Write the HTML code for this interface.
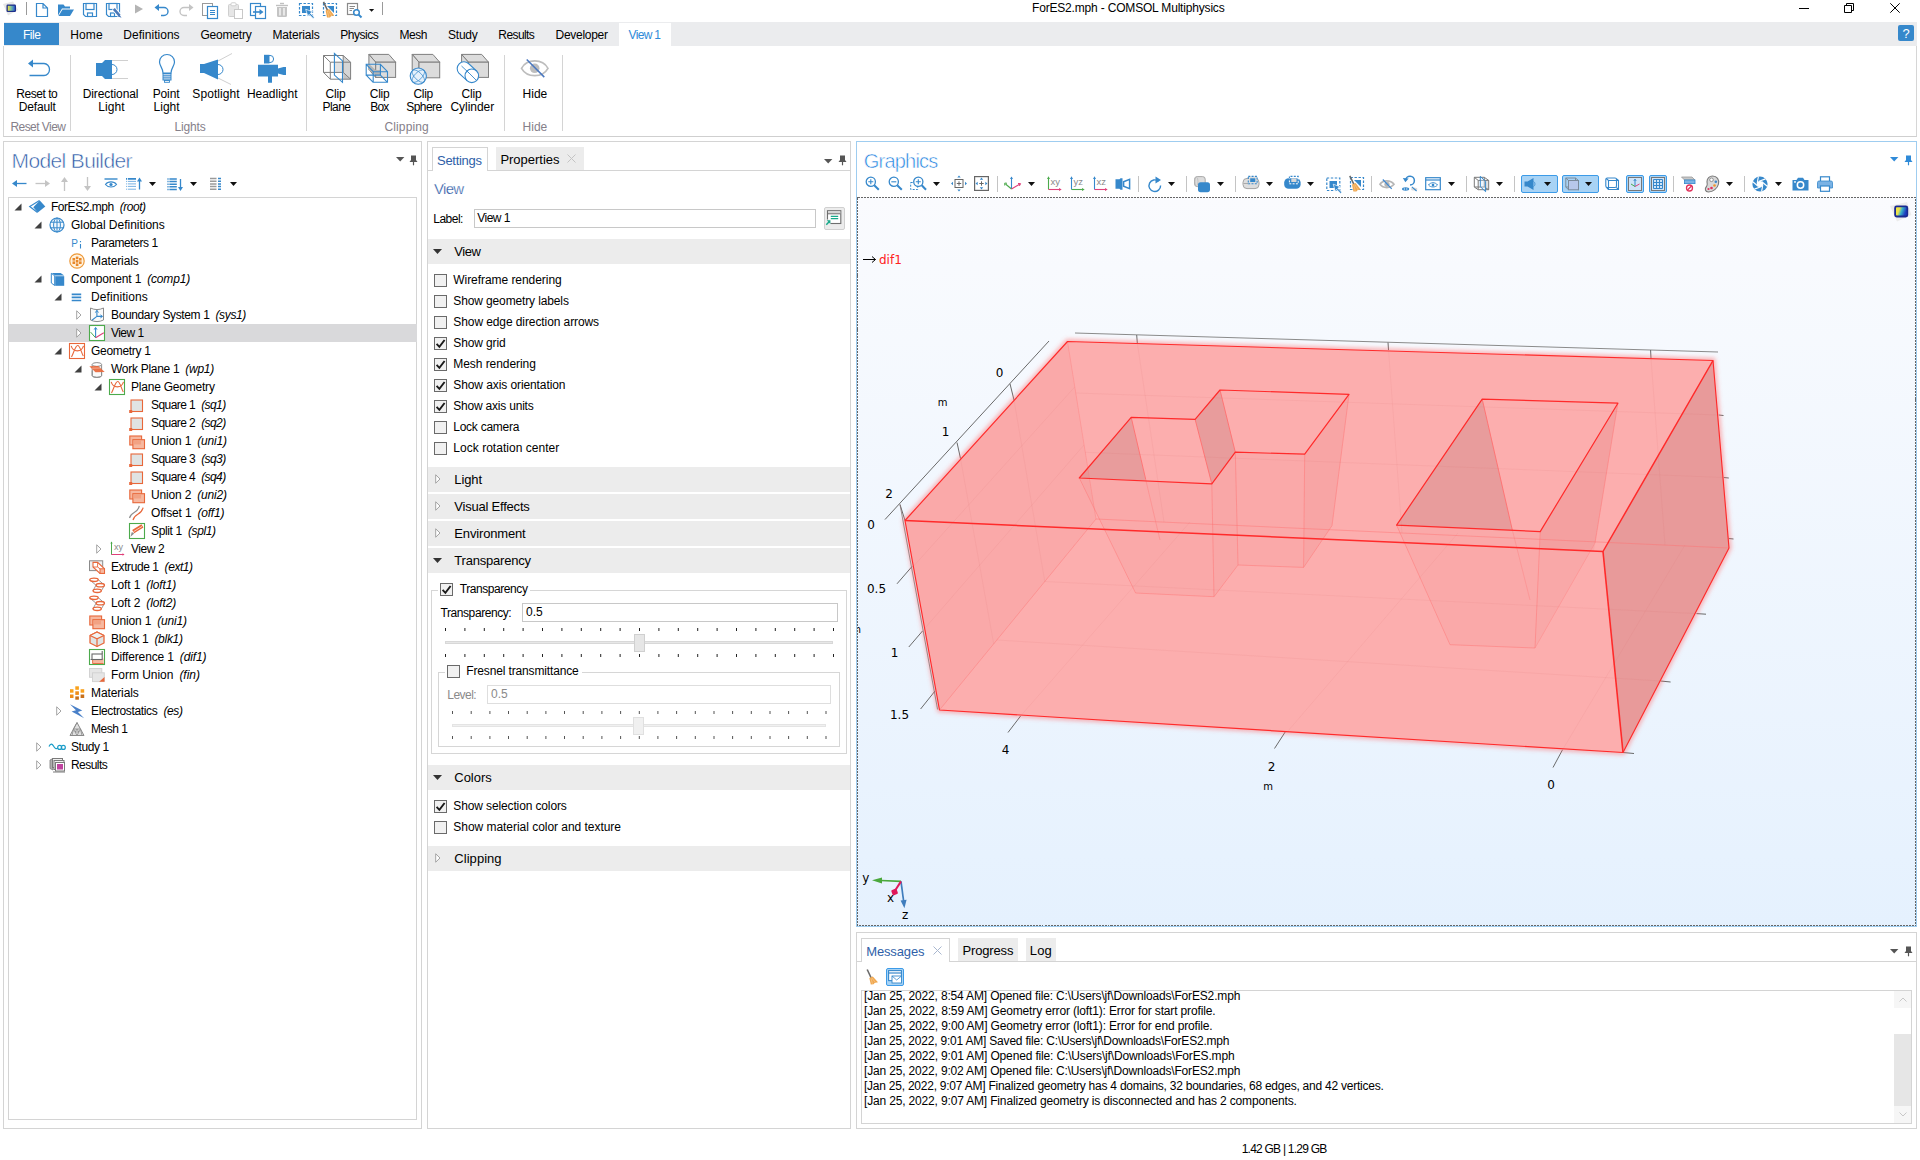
<!DOCTYPE html>
<html><head><meta charset="utf-8"><title>ForES2.mph - COMSOL Multiphysics</title>
<style>
html,body{margin:0;padding:0;background:#fff;}
body{width:1920px;height:1160px;overflow:hidden;position:relative;font-family:"Liberation Sans",sans-serif;font-size:12px;color:#000;}
i{font-style:italic}
</style></head><body>
<svg style="position:absolute;left:2px;top:1px;overflow:visible;" width="17" height="15" viewBox="0 0 17 15"><defs><linearGradient id="lg1" x1="0" y1="0" x2="1" y2="0"><stop offset="0" stop-color="#f0e040"/><stop offset="0.45" stop-color="#7ac0a0"/><stop offset="1" stop-color="#2a5fd0"/></linearGradient></defs><path d="M1 3 L11 0.5 L16 9 L6 14.5 Z" fill="#e6e6e6"/><rect x="4.5" y="3.5" width="9.5" height="7.5" rx="1.2" fill="#1e2f8a"/><rect x="5.8" y="4.8" width="7" height="5" fill="url(#lg1)"/></svg>
<div style="position:absolute;left:26px;top:2px;width:1px;height:13px;background:#9a9a9a"></div>
<svg style="position:absolute;left:35px;top:2px;overflow:visible;" width="14" height="16" viewBox="0 0 14 16"><path d="M1.5 1.5 H8 L12.5 6 V14.5 H1.5 Z M8 1.5 V6 H12.5" fill="none" stroke="#3688cb" stroke-width="1.2"/></svg>
<svg style="position:absolute;left:57px;top:3px;overflow:visible;" width="18" height="14" viewBox="0 0 18 14"><path d="M1 1.5 H6.5 L8 3.5 H13 V5.5 H5 L1 12.5 Z" fill="#3688cb"/><path d="M5.5 6.5 H17 L13 13 H1.5 Z" fill="#3688cb"/></svg>
<svg style="position:absolute;left:82px;top:2px;overflow:visible;" width="16" height="16" viewBox="0 0 16 16"><path d="M1.5 1.5 H14.5 V14.5 H3.5 L1.5 12.5 Z" fill="none" stroke="#3688cb" stroke-width="1.2"/><rect x="4" y="1.5" width="8" height="6" fill="none" stroke="#3688cb" stroke-width="1.2"/><rect x="5.5" y="11" width="5" height="3.5" fill="none" stroke="#3688cb" stroke-width="1.2"/></svg>
<svg style="position:absolute;left:105px;top:2px;overflow:visible;" width="18" height="16" viewBox="0 0 18 16"><path d="M1.5 1.5 H14.5 V14.5 H3.5 L1.5 12.5 Z" fill="none" stroke="#3688cb" stroke-width="1.2"/><rect x="4" y="1.5" width="8" height="6" fill="none" stroke="#3688cb" stroke-width="1.2"/><rect x="5.5" y="11" width="4" height="3.5" fill="none" stroke="#3688cb" stroke-width="1.2"/><path d="M8.5 6.5 L15 14" stroke="#fff" stroke-width="4.4"/><path d="M8.8 6.8 L14.6 13.6" stroke="#4a78b8" stroke-width="2.6"/><path d="M14.2 12.4 L16.6 15.8 L13 14.4 Z" fill="#4a78b8"/></svg>
<svg style="position:absolute;left:134px;top:4px;overflow:visible;" width="10" height="10" viewBox="0 0 10 10"><path d="M1 0.5 L9 5 L1 9.5 Z" fill="#b4b4b4"/></svg>
<svg style="position:absolute;left:154px;top:3px;overflow:visible;" width="16" height="14" viewBox="0 0 16 14"><path d="M3 4.5 H10 A4 4 0 0 1 10 12.5 H7" fill="none" stroke="#3688cb" stroke-width="1.4"/><path d="M0.5 4.5 L5 1 V8 Z" fill="#3688cb"/></svg>
<svg style="position:absolute;left:178px;top:3px;overflow:visible;" width="16" height="14" viewBox="0 0 16 14"><path d="M13 4.5 H6 A4 4 0 0 0 6 12.5 H9" fill="none" stroke="#c4c4c4" stroke-width="1.4"/><path d="M15.5 4.5 L11 1 V8 Z" fill="#c4c4c4"/></svg>
<svg style="position:absolute;left:201px;top:2px;overflow:visible;" width="18" height="17" viewBox="0 0 18 17"><rect x="1.5" y="1.5" width="10" height="12" fill="#fff" stroke="#9a9a9a" stroke-width="1"/><rect x="6.5" y="4.5" width="10" height="12" fill="#fff" stroke="#3688cb" stroke-width="1.2"/><path d="M9 8.5 H14 M9 10.5 H14 M9 12.5 H14" stroke="#3688cb" stroke-width="1"/></svg>
<svg style="position:absolute;left:227px;top:2px;overflow:visible;" width="17" height="17" viewBox="0 0 17 17"><rect x="1.5" y="2.5" width="10" height="12" rx="1" fill="#e6e6e6" stroke="#cfcfcf"/><rect x="4" y="0.8" width="5" height="3" rx="1" fill="#fff" stroke="#cfcfcf"/><rect x="7.5" y="7.5" width="8" height="9" fill="#fff" stroke="#c8c8c8"/></svg>
<svg style="position:absolute;left:249px;top:2px;overflow:visible;" width="18" height="17" viewBox="0 0 18 17"><rect x="1.5" y="1.5" width="10" height="12" fill="#fff" stroke="#3688cb" stroke-width="1.2"/><rect x="6.5" y="4.5" width="10" height="12" fill="#fff" stroke="#3688cb" stroke-width="1.2"/><path d="M4 10 H12" stroke="#3688cb" stroke-width="1.6"/><path d="M10.5 7 L14.5 10 L10.5 13 Z" fill="#3688cb"/></svg>
<svg style="position:absolute;left:275px;top:2px;overflow:visible;" width="14" height="16" viewBox="0 0 14 16"><path d="M1 3.5 H13" stroke="#c0c0c0" stroke-width="1.4"/><path d="M5 1.5 H9" stroke="#c0c0c0" stroke-width="1.4"/><path d="M2 5 H12 V13.5 A1.5 1.5 0 0 1 10.5 15 H3.5 A1.5 1.5 0 0 1 2 13.5 Z" fill="#c4c4c4"/><path d="M5 6 V13.5 M9 6 V13.5" stroke="#fff" stroke-width="1.2"/></svg>
<svg style="position:absolute;left:298px;top:2px;overflow:visible;" width="18" height="16" viewBox="0 0 18 16"><rect x="1.5" y="1.5" width="13" height="12" fill="none" stroke="#3688cb" stroke-width="1.2" stroke-dasharray="2.4 1.6"/><rect x="4" y="4" width="8" height="7" fill="#3688cb"/><path d="M7.7 7.2 L14.7 9.8 L12.3 11.2 L16.3 15.2 L15.1 16.4 L11.1 12.4 L9.9 14.6 Z" fill="#3688cb" stroke="#fff" stroke-width="0.7"/></svg>
<svg style="position:absolute;left:322px;top:1px;overflow:visible;" width="18" height="17" viewBox="0 0 18 17"><rect x="1.5" y="2.5" width="13" height="12" fill="none" stroke="#3688cb" stroke-width="1.2" stroke-dasharray="2.4 1.6"/><path d="M5 5 H12 V12 Z" fill="#3688cb"/><path d="M1.5 0.8 L5.6 9.5" stroke="#6a6a6a" stroke-width="1.6"/><path d="M3.6 9.4 L7.2 8 L12.2 14.6 L9 15.2 L8 16.6 L5 16.6 Z" fill="#f0a850"/><path d="M5.4 10 L6.8 16 M6.4 9.5 L9.8 15" stroke="#f8cf98" stroke-width="0.6"/></svg>
<svg style="position:absolute;left:346px;top:2px;overflow:visible;" width="18" height="17" viewBox="0 0 18 17"><rect x="1.5" y="1.5" width="10" height="11" fill="#fff" stroke="#8a8a8a" stroke-width="1.2"/><path d="M3.5 4.5 H9 M3.5 6.5 H8 M3.5 8.5 H6" stroke="#8a8a8a" stroke-width="1"/><circle cx="10.5" cy="10.5" r="2.8" fill="#fff" stroke="#3688cb" stroke-width="1.5"/><path d="M12.6 12.6 L15.5 15.5" stroke="#3688cb" stroke-width="2"/></svg>
<svg style="position:absolute;left:368.8px;top:9px;overflow:visible;" width="5.2" height="2.8" viewBox="0 0 5.2 2.8"><path d="M0 0 H5.2 L2.6 2.8 Z" fill="#111"/></svg>
<div style="position:absolute;left:382px;top:2px;width:1px;height:13px;background:#9a9a9a"></div>
<div style="position:absolute;left:1032px;top:0.0px;line-height:16px;font-size:12px;color:#000;white-space:nowrap;letter-spacing:-0.180px;">ForES2.mph - COMSOL Multiphysics</div>
<svg style="position:absolute;left:1799px;top:7px;overflow:visible;" width="12" height="3" viewBox="0 0 12 3"><path d="M0 1.5 H10" stroke="#000" stroke-width="1"/></svg>
<svg style="position:absolute;left:1844px;top:3px;overflow:visible;" width="12" height="11" viewBox="0 0 12 11"><path d="M0.5 2.5 H7.5 V9.5 H0.5 Z M2.5 2.5 V0.5 H9.5 V7.5 H7.5" fill="none" stroke="#000" stroke-width="1"/></svg>
<svg style="position:absolute;left:1890px;top:3px;overflow:visible;" width="11" height="11" viewBox="0 0 11 11"><path d="M0.3 0.3 L9.7 9.7 M9.7 0.3 L0.3 9.7" stroke="#000" stroke-width="1"/></svg>
<div style="position:absolute;left:4px;top:22px;width:1913px;height:24px;background:#ebecee"></div>
<div style="position:absolute;left:4px;top:23px;width:55px;height:22px;background:#3688cb"></div>
<div style="position:absolute;left:-118.20598958333333px;width:300px;text-align:center;top:27.0px;line-height:16px;font-size:12px;color:#fff;white-space:nowrap;letter-spacing:-0.412px;">File</div>
<div style="position:absolute;left:70.2px;top:27.0px;line-height:16px;font-size:12px;color:#000;white-space:nowrap;letter-spacing:0.163px;">Home</div>
<div style="position:absolute;left:123.3px;top:27.0px;line-height:16px;font-size:12px;color:#000;white-space:nowrap;letter-spacing:0.027px;">Definitions</div>
<div style="position:absolute;left:200.4px;top:27.0px;line-height:16px;font-size:12px;color:#000;white-space:nowrap;letter-spacing:-0.197px;">Geometry</div>
<div style="position:absolute;left:272.5px;top:27.0px;line-height:16px;font-size:12px;color:#000;white-space:nowrap;letter-spacing:-0.172px;">Materials</div>
<div style="position:absolute;left:340.2px;top:27.0px;line-height:16px;font-size:12px;color:#000;white-space:nowrap;letter-spacing:-0.457px;">Physics</div>
<div style="position:absolute;left:399.4px;top:27.0px;line-height:16px;font-size:12px;color:#000;white-space:nowrap;letter-spacing:-0.415px;">Mesh</div>
<div style="position:absolute;left:448.1px;top:27.0px;line-height:16px;font-size:12px;color:#000;white-space:nowrap;letter-spacing:-0.271px;">Study</div>
<div style="position:absolute;left:498.3px;top:27.0px;line-height:16px;font-size:12px;color:#000;white-space:nowrap;letter-spacing:-0.586px;">Results</div>
<div style="position:absolute;left:555.6px;top:27.0px;line-height:16px;font-size:12px;color:#000;white-space:nowrap;letter-spacing:-0.300px;">Developer</div>
<div style="position:absolute;left:619px;top:23px;width:52px;height:24px;background:#fff"></div>
<div style="position:absolute;left:628.5px;top:27.0px;line-height:16px;font-size:12px;color:#2f8ad8;white-space:nowrap;letter-spacing:-0.660px;">View 1</div>
<div style="position:absolute;left:1898px;top:25px;width:16px;height:16px;background:#3688cb;border-radius:2px"></div>
<div style="position:absolute;left:1898.0px;width:16px;text-align:center;top:24.5px;line-height:17px;font-size:13px;color:#fff;white-space:nowrap;">?</div>
<div style="position:absolute;left:3px;top:46px;width:1914px;height:91px;background:#fff;border-left:1px solid #d6d6d6;border-right:1px solid #d6d6d6;border-bottom:1px solid #cfcfcf;box-sizing:border-box"></div>
<div style="position:absolute;left:70px;top:55px;width:1px;height:76px;background:#d4d4d4"></div>
<div style="position:absolute;left:306px;top:55px;width:1px;height:76px;background:#d4d4d4"></div>
<div style="position:absolute;left:504px;top:55px;width:1px;height:76px;background:#d4d4d4"></div>
<div style="position:absolute;left:562px;top:55px;width:1px;height:76px;background:#d4d4d4"></div>
<div style="position:absolute;left:-113.22781808035714px;width:300px;text-align:center;top:86.0px;line-height:16px;font-size:12px;color:#000;white-space:nowrap;letter-spacing:-0.456px;">Reset to</div>
<div style="position:absolute;left:-112.78512369791667px;width:300px;text-align:center;top:99.0px;line-height:16px;font-size:12px;color:#000;white-space:nowrap;letter-spacing:-0.170px;">Default</div>
<div style="position:absolute;left:-39.44447265625px;width:300px;text-align:center;top:86.0px;line-height:16px;font-size:12px;color:#000;white-space:nowrap;letter-spacing:-0.089px;">Directional</div>
<div style="position:absolute;left:-38.465185546875006px;width:300px;text-align:center;top:99.0px;line-height:16px;font-size:12px;color:#000;white-space:nowrap;letter-spacing:0.070px;">Light</div>
<div style="position:absolute;left:16.043554687500006px;width:300px;text-align:center;top:86.0px;line-height:16px;font-size:12px;color:#000;white-space:nowrap;letter-spacing:-0.113px;">Point</div>
<div style="position:absolute;left:16.609814453124983px;width:300px;text-align:center;top:99.0px;line-height:16px;font-size:12px;color:#000;white-space:nowrap;letter-spacing:0.020px;">Light</div>
<div style="position:absolute;left:66.03754882812501px;width:300px;text-align:center;top:86.0px;line-height:16px;font-size:12px;color:#000;white-space:nowrap;letter-spacing:0.075px;">Spotlight</div>
<div style="position:absolute;left:122.19367675781251px;width:300px;text-align:center;top:86.0px;line-height:16px;font-size:12px;color:#000;white-space:nowrap;letter-spacing:-0.013px;">Headlight</div>
<div style="position:absolute;left:185.5546875px;width:300px;text-align:center;top:86.0px;line-height:16px;font-size:12px;color:#000;white-space:nowrap;letter-spacing:-0.091px;">Clip</div>
<div style="position:absolute;left:186.52607421875px;width:300px;text-align:center;top:99.0px;line-height:16px;font-size:12px;color:#000;white-space:nowrap;letter-spacing:-0.548px;">Plane</div>
<div style="position:absolute;left:229.5546875px;width:300px;text-align:center;top:86.0px;line-height:16px;font-size:12px;color:#000;white-space:nowrap;letter-spacing:-0.291px;">Clip</div>
<div style="position:absolute;left:229.35000000000002px;width:300px;text-align:center;top:99.0px;line-height:16px;font-size:12px;color:#000;white-space:nowrap;letter-spacing:-0.900px;">Box</div>
<div style="position:absolute;left:273.2546875px;width:300px;text-align:center;top:86.0px;line-height:16px;font-size:12px;color:#000;white-space:nowrap;letter-spacing:-0.291px;">Clip</div>
<div style="position:absolute;left:273.91046875px;width:300px;text-align:center;top:99.0px;line-height:16px;font-size:12px;color:#000;white-space:nowrap;letter-spacing:-0.579px;">Sphere</div>
<div style="position:absolute;left:321.5213541666667px;width:300px;text-align:center;top:86.0px;line-height:16px;font-size:12px;color:#000;white-space:nowrap;letter-spacing:-0.157px;">Clip</div>
<div style="position:absolute;left:322.2845982142857px;width:300px;text-align:center;top:99.0px;line-height:16px;font-size:12px;color:#000;white-space:nowrap;letter-spacing:-0.031px;">Cylinder</div>
<div style="position:absolute;left:384.9200520833333px;width:300px;text-align:center;top:86.0px;line-height:16px;font-size:12px;color:#000;white-space:nowrap;letter-spacing:0.040px;">Hide</div>
<div style="position:absolute;left:-112.07081163194445px;width:300px;text-align:center;top:119.0px;line-height:16px;font-size:12px;color:#85808a;white-space:nowrap;letter-spacing:-0.542px;">Reset View</div>
<div style="position:absolute;left:40.11785156249999px;width:300px;text-align:center;top:119.0px;line-height:16px;font-size:12px;color:#85808a;white-space:nowrap;letter-spacing:-0.164px;">Lights</div>
<div style="position:absolute;left:256.6743303571429px;width:300px;text-align:center;top:119.0px;line-height:16px;font-size:12px;color:#85808a;white-space:nowrap;letter-spacing:0.149px;">Clipping</div>
<div style="position:absolute;left:384.9200520833333px;width:300px;text-align:center;top:119.0px;line-height:16px;font-size:12px;color:#85808a;white-space:nowrap;letter-spacing:0.040px;">Hide</div>
<svg style="position:absolute;left:27px;top:58px;overflow:visible;" width="24" height="20" viewBox="0 0 24 20"><path d="M4 5.5 H17 A5.5 6 0 0 1 17 17.5 H2.5" fill="none" stroke="#3688cb" stroke-width="1.3"/><path d="M1 5.5 L6 1.5 V9.5 Z" fill="#3688cb"/></svg>
<svg style="position:absolute;left:95px;top:59px;overflow:visible;" width="34" height="22" viewBox="0 0 34 22"><path d="M1 4 H7 L10 1 H17 V20 H10 L7 17 H1 Z" fill="#3688cb"/><path d="M17 5.5 A5 5 0 0 1 17 15.5" fill="none" stroke="#3688cb" stroke-width="1"/><path d="M17 1.5 H33 M17 19.5 H33" stroke="#d0d0d0" stroke-width="1"/></svg>
<svg style="position:absolute;left:158px;top:54px;overflow:visible;" width="18" height="30" viewBox="0 0 18 30"><path d="M5 19 C5 14 1.5 12 1.5 8 A7.2 7.2 0 0 1 16.5 8 C16.5 12 13 14 13 19 Z" fill="none" stroke="#3688cb" stroke-width="1.2"/><rect x="5" y="19.5" width="8" height="6.5" fill="#b9d3ea" stroke="#3688cb" stroke-width="1"/><path d="M5 21.7 H13 M5 23.8 H13" stroke="#3688cb" stroke-width="0.8"/><rect x="6.5" y="26.5" width="5" height="1.8" fill="none" stroke="#3688cb" stroke-width="0.9"/></svg>
<svg style="position:absolute;left:199px;top:53px;overflow:visible;" width="34" height="32" viewBox="0 0 34 32"><path d="M1 11 H5 L19 6.5 V26.5 L5 20 H1 Z" fill="#3688cb"/><path d="M19 11.5 A5 5 0 0 1 19 21.5" fill="none" stroke="#3688cb" stroke-width="1"/><path d="M19 8 L33 0.5 M19 25 L32 31.5" stroke="#d0d0d0" stroke-width="1"/></svg>
<svg style="position:absolute;left:257px;top:54px;overflow:visible;" width="30" height="30" viewBox="0 0 30 30"><circle cx="13" cy="5" r="3.6" fill="#fff" stroke="#3688cb" stroke-width="1"/><path d="M7 0.8 H12.5 V9.5 H7 Z" fill="#3688cb"/><path d="M1 10.7 H21 V14.5 L26.5 13 H29 V21 H26.5 L21 19.5 V22.5 H15 V28.7 H11 V22.5 H1 Z" fill="#3688cb"/></svg>
<svg style="position:absolute;left:320px;top:50px;overflow:visible;" width="36" height="36" viewBox="320 50 36 36"><path d="M343.2 62.2 H350.6 V79.2 H343.2 Z" fill="#c4c4c4"/><path d="M335 62.2 H343.2 V72.4 H335 Z" fill="#e2e2e2"/><path d="M343.2 55.5 L350.6 62.2 V79.2 L343.2 72.4 Z" fill="#d6d6d6"/><path d="M323.5 55.5 H343.2 V72.4 H323.5 Z M330.3 62.2 H350.6 V79.2 H330.3 Z M323.5 55.5 L330.3 62.2 M343.2 55.5 L350.6 62.2 M343.2 72.4 L350.6 79.2 M323.5 72.4 L330.3 79.2" fill="none" stroke="#7f7f7f" stroke-width="1"/><path d="M334.4 53.4 L342.5 60.9 V82.3 L334.4 75.1 Z" fill="none" stroke="#3688cb" stroke-width="1.1"/></svg>
<svg style="position:absolute;left:362px;top:50px;overflow:visible;" width="36" height="36" viewBox="362 50 36 36"><path d="M375.7 62.2 L368.9 54.400000000000006 H388.8 L395.6 62.2 Z" fill="#dcdcdc" stroke="#7f7f7f" stroke-width="1"/><path d="M375.7 62.2 L368.9 54.400000000000006 V69.60000000000001 L375.7 77.4 Z" fill="#dcdcdc" stroke="#7f7f7f" stroke-width="1"/><rect x="375.7" y="62.2" width="19.900000000000034" height="15.200000000000003" fill="#dcdcdc" stroke="#7f7f7f" stroke-width="1"/><path d="M368.5 63.5 L375.7 70 H381 V75 H375.7 L368.5 70 Z" fill="#b4b4b4"/><path d="M366.2 64.3 H380.4 V75.1 H366.2 Z M373.2 71.7 H387.5 V82.3 H373.2 Z M366.2 64.3 L373.2 71.7 M380.4 64.3 L387.5 71.7 M380.4 75.1 L387.5 82.3 M366.2 75.1 L373.2 82.3" fill="none" stroke="#3688cb" stroke-width="1.1"/></svg>
<svg style="position:absolute;left:406px;top:50px;overflow:visible;" width="36" height="36" viewBox="406 50 36 36"><path d="M419 62.2 L412.2 54.400000000000006 H432.9 L439.7 62.2 Z" fill="#dcdcdc" stroke="#7f7f7f" stroke-width="1"/><path d="M419 62.2 L412.2 54.400000000000006 V70.0 L419 77.8 Z" fill="#dcdcdc" stroke="#7f7f7f" stroke-width="1"/><rect x="419" y="62.2" width="20.69999999999999" height="15.599999999999994" fill="#dcdcdc" stroke="#7f7f7f" stroke-width="1"/><circle cx="418.3" cy="76.1" r="8.1" fill="#e6f1fb" stroke="#3688cb" stroke-width="1.1"/><ellipse cx="418.3" cy="76.1" rx="8.1" ry="3.6" fill="none" stroke="#3688cb" stroke-width="0.7" transform="rotate(45 418.3 76.1)"/><ellipse cx="418.3" cy="76.1" rx="8.1" ry="3.6" fill="none" stroke="#3688cb" stroke-width="0.7" transform="rotate(-45 418.3 76.1)"/></svg>
<svg style="position:absolute;left:455px;top:50px;overflow:visible;" width="36" height="36" viewBox="455 50 36 36"><path d="M468.4 62.2 L461.59999999999997 54.400000000000006 H481.7 L488.5 62.2 Z" fill="#dcdcdc" stroke="#7f7f7f" stroke-width="1"/><path d="M468.4 62.2 L461.59999999999997 54.400000000000006 V69.60000000000001 L468.4 77.4 Z" fill="#dcdcdc" stroke="#7f7f7f" stroke-width="1"/><rect x="468.4" y="62.2" width="20.100000000000023" height="15.200000000000003" fill="#dcdcdc" stroke="#7f7f7f" stroke-width="1"/><path d="M458.9 73.1 A6.8 6.8 0 0 1 468.5 63.5 L476.6 71 L467 80.6 Z" fill="#fff" stroke="#3688cb" stroke-width="1.1"/><circle cx="471.8" cy="75.8" r="6.8" fill="#fff" stroke="#3688cb" stroke-width="1.1"/><path d="M467 71 L476.6 80.6 M461.5 66 L469 73" stroke="#3688cb" stroke-width="0.9"/></svg>
<svg style="position:absolute;left:518px;top:55px;overflow:visible;" width="34" height="26" viewBox="518 55 34 26"><path d="M521.5 68.3 C527 58.5 542.5 58.5 548 68.3 C542.5 78 527 78 521.5 68.3 Z" fill="none" stroke="#bdbdbd" stroke-width="1.7"/><circle cx="534.7" cy="68.3" r="4.8" fill="#bdbdbd"/><path d="M526.7 59.5 L544.3 77.1" stroke="#4a78c0" stroke-width="1.5"/></svg>
<div style="position:absolute;left:3px;top:141px;width:419px;height:988px;border:1px solid #d4d4d4;box-sizing:border-box;background:#fff"></div>
<div style="position:absolute;left:11.5px;top:148.0px;line-height:26px;font-size:21px;color:#2c5aa6;white-space:nowrap;letter-spacing:-0.617px;-webkit-text-stroke:0.55px #fff;">Model Builder</div>
<svg style="position:absolute;left:395.8px;top:157.0px;overflow:visible;" width="8.4" height="4.5" viewBox="0 0 8.4 4.5"><path d="M0 0 H8.4 L4.2 4.5 Z" fill="#555"/></svg>
<svg style="position:absolute;left:408.2px;top:154.7px;overflow:visible;" width="11" height="12" viewBox="0 0 11 12"><path d="M3 0.5 H8 V5 L9.5 7 H1.5 L3 5 Z" fill="#555"/><path d="M5.5 7 V10.3" stroke="#555" stroke-width="1.2"/></svg>
<svg style="position:absolute;left:12px;top:178px;overflow:visible;" width="15" height="11" viewBox="0 0 15 11"><path d="M3 5.5 H14.5" stroke="#3688cb" stroke-width="1.3"/><path d="M0 5.5 L5 2 V9 Z" fill="#3688cb"/></svg>
<svg style="position:absolute;left:35px;top:178px;overflow:visible;" width="15" height="11" viewBox="0 0 15 11"><path d="M0.5 5.5 H12" stroke="#c4c4c4" stroke-width="1.3"/><path d="M15 5.5 L10 2 V9 Z" fill="#c4c4c4"/></svg>
<svg style="position:absolute;left:59px;top:177px;overflow:visible;" width="11" height="14" viewBox="0 0 11 14"><path d="M5.5 3 V14" stroke="#c4c4c4" stroke-width="1.3"/><path d="M5.5 0 L2 5 H9 Z" fill="#c4c4c4"/></svg>
<svg style="position:absolute;left:82px;top:177px;overflow:visible;" width="11" height="14" viewBox="0 0 11 14"><path d="M5.5 0 V11" stroke="#c4c4c4" stroke-width="1.3"/><path d="M5.5 14 L2 9 H9 Z" fill="#c4c4c4"/></svg>
<svg style="position:absolute;left:104px;top:178px;overflow:visible;" width="14" height="10" viewBox="0 0 14 10"><path d="M0.5 1 H13.5" stroke="#3688cb" stroke-width="1.4"/><path d="M1.5 6.5 C4 3 10 3 12.5 6.5 C10 9.8 4 9.8 1.5 6.5 Z" fill="none" stroke="#3688cb" stroke-width="1.2"/><circle cx="7" cy="6.5" r="1.6" fill="#3688cb"/></svg>
<svg style="position:absolute;left:126px;top:177px;overflow:visible;" width="18" height="14" viewBox="0 0 18 14"><path d="M0 1.9 H10" stroke="#3688cb" stroke-width="1.7" stroke-dasharray="1.2 0.8 20"/><path d="M0 4.4 H10 M0 6.9 H10 M0 9.4 H10 M0 12.2 H10" stroke="#6aa8e0" stroke-width="0.9" stroke-dasharray="1.2 0.8 20"/><path d="M13.5 3 V12.5" stroke="#3688cb" stroke-width="1.3"/><path d="M13.5 0.5 L11 4.5 H16 Z" fill="#3688cb"/></svg>
<svg style="position:absolute;left:149px;top:182px;overflow:visible;" width="7" height="4" viewBox="0 0 7 4"><path d="M0 0 H7 L3.5 4 Z" fill="#111"/></svg>
<svg style="position:absolute;left:167px;top:177px;overflow:visible;" width="18" height="14" viewBox="0 0 18 14"><path d="M0.4 2 H9.8 M0.4 4.6 H9.8 M0.4 7.2 H9.8 M0.4 9.8 H9.8 M0.4 12.4 H9.8" stroke="#3688cb" stroke-width="1.5" stroke-dasharray="1.2 0.8 20"/><path d="M13.5 2 V11" stroke="#3688cb" stroke-width="1.3"/><path d="M13.5 14 L11 10 H16 Z" fill="#3688cb"/></svg>
<svg style="position:absolute;left:190px;top:182px;overflow:visible;" width="7" height="4" viewBox="0 0 7 4"><path d="M0 0 H7 L3.5 4 Z" fill="#111"/></svg>
<svg style="position:absolute;left:210px;top:177px;overflow:visible;" width="12" height="14" viewBox="0 0 12 14"><path d="M0 1.5 H6.5 M0 4.2 H6.5 M0 6.9 H6.5 M0 9.6 H6.5 M0 12.3 H6.5" stroke="#9a9a9a" stroke-width="1.5"/><path d="M8 1.5 H11 M8 4.2 H11 M8 6.9 H11 M8 9.6 H11 M8 12.3 H11" stroke="#3688cb" stroke-width="1.5"/></svg>
<svg style="position:absolute;left:230px;top:182px;overflow:visible;" width="7" height="4" viewBox="0 0 7 4"><path d="M0 0 H7 L3.5 4 Z" fill="#111"/></svg>
<div style="position:absolute;left:8px;top:197px;width:409px;height:923px;border:1px solid #d4d4d4;box-sizing:border-box;background:#fff"></div>
<svg style="position:absolute;left:13.5px;top:202.5px;overflow:visible;" width="8" height="8" viewBox="0 0 8 8"><path d="M7.5 0.5 V7.5 H0.5 Z" fill="#404040"/></svg>
<svg style="position:absolute;left:29px;top:199px;overflow:visible;" width="16" height="16" viewBox="0 0 16 16"><path d="M10.5 1.5 L0.7 7.6 L8.5 13.5" fill="none" stroke="#3688cb" stroke-width="1.2"/><path d="M10.8 1.6 L16.3 7.6 L8.8 13.6 L4.3 8.2 Z" fill="#3688cb"/></svg>
<div style="position:absolute;left:51px;top:199.0px;line-height:16px;font-size:12px;color:#000;white-space:nowrap;letter-spacing:-0.462px;">ForES2.mph<i style="margin-left:6px">(root)</i></div>
<svg style="position:absolute;left:33.5px;top:220.5px;overflow:visible;" width="8" height="8" viewBox="0 0 8 8"><path d="M7.5 0.5 V7.5 H0.5 Z" fill="#404040"/></svg>
<svg style="position:absolute;left:49px;top:217px;overflow:visible;" width="16" height="16" viewBox="0 0 16 16"><circle cx="8" cy="8" r="7" fill="#f2f8fd" stroke="#3688cb" stroke-width="1.2"/><ellipse cx="8" cy="8" rx="3.4" ry="7" fill="none" stroke="#3688cb" stroke-width="1"/><path d="M8 1 V15 M1.8 5.2 H14.2 M1.8 10.8 H14.2" stroke="#3688cb" stroke-width="1"/></svg>
<div style="position:absolute;left:71px;top:217.0px;line-height:16px;font-size:12px;color:#000;white-space:nowrap;letter-spacing:-0.021px;">Global Definitions</div>
<svg style="position:absolute;left:69px;top:235px;overflow:visible;" width="16" height="16" viewBox="0 0 16 16"><text x="2.2" y="11.6" font-family="Liberation Sans, sans-serif" font-size="10" fill="#3688cb">P</text><path d="M11.5 6 V7.3 M11.5 9 V13.5" stroke="#3688cb" stroke-width="1.1"/></svg>
<div style="position:absolute;left:91px;top:235.0px;line-height:16px;font-size:12px;color:#000;white-space:nowrap;letter-spacing:-0.448px;">Parameters 1</div>
<svg style="position:absolute;left:69px;top:253px;overflow:visible;" width="16" height="16" viewBox="0 0 16 16"><circle cx="8" cy="8" r="7.2" fill="#fff3e0" stroke="#ee9a3a" stroke-width="1.2"/><g fill="#e8882a"><rect x="3.5" y="5" width="2.6" height="2.6"/><rect x="6.8" y="3.6" width="2.6" height="2.6"/><rect x="10" y="5" width="2.6" height="2.6"/><rect x="3.5" y="8.4" width="2.6" height="2.6"/><rect x="6.8" y="7" width="2.6" height="2.6"/><rect x="10" y="8.4" width="2.6" height="2.6"/><rect x="6.8" y="10.4" width="2.6" height="2.6"/></g></svg>
<div style="position:absolute;left:91px;top:253.0px;line-height:16px;font-size:12px;color:#000;white-space:nowrap;letter-spacing:-0.110px;">Materials</div>
<svg style="position:absolute;left:33.5px;top:274.5px;overflow:visible;" width="8" height="8" viewBox="0 0 8 8"><path d="M7.5 0.5 V7.5 H0.5 Z" fill="#404040"/></svg>
<svg style="position:absolute;left:49px;top:271px;overflow:visible;" width="16" height="16" viewBox="0 0 16 16"><path d="M2.3 2.3 L5.7 4.8 V14.5 L2.3 12 Z" fill="#fff" stroke="#3688cb" stroke-width="1"/><path d="M2.8 1.9 H11.6 L15.2 4.4 H6.2 Z" fill="#3688cb"/><rect x="6.2" y="5.2" width="9" height="9.6" fill="#3688cb"/></svg>
<div style="position:absolute;left:71px;top:271.0px;line-height:16px;font-size:12px;color:#000;white-space:nowrap;letter-spacing:-0.168px;">Component 1<i style="margin-left:6px">(comp1)</i></div>
<svg style="position:absolute;left:53.5px;top:292.5px;overflow:visible;" width="8" height="8" viewBox="0 0 8 8"><path d="M7.5 0.5 V7.5 H0.5 Z" fill="#404040"/></svg>
<svg style="position:absolute;left:69px;top:289px;overflow:visible;" width="16" height="16" viewBox="0 0 16 16"><path d="M2.7 5.3 H12.2 M2.7 8.4 H12.2 M2.7 11.5 H12.2" stroke="#3688cb" stroke-width="1.7"/></svg>
<div style="position:absolute;left:91px;top:289.0px;line-height:16px;font-size:12px;color:#000;white-space:nowrap;letter-spacing:0.077px;">Definitions</div>
<svg style="position:absolute;left:76px;top:310px;overflow:visible;" width="6" height="10" viewBox="0 0 6 10"><path d="M0.7 0.8 L5 5 L0.7 9.2 Z" fill="#fff" stroke="#9a9a9a" stroke-width="0.9"/></svg>
<svg style="position:absolute;left:89px;top:307px;overflow:visible;" width="16" height="16" viewBox="0 0 16 16"><path d="M1.5 1 Q8 4.2 14.5 1 V13 Q8 16.2 1.5 13 Z" fill="#fafafa" stroke="#8c8c8c" stroke-width="1"/><path d="M7.9 3.7 V9.4 H13 M7.9 9.4 L2.9 13.2" fill="none" stroke="#3688cb" stroke-width="1.1"/><path d="M6.4 5.6 L7.9 3.2 L9.4 5.6 M11.4 7.9 L13.6 9.4 L11.4 10.9" fill="none" stroke="#3688cb" stroke-width="1"/></svg>
<div style="position:absolute;left:111px;top:307.0px;line-height:16px;font-size:12px;color:#000;white-space:nowrap;letter-spacing:-0.367px;">Boundary System 1<i style="margin-left:6px">(sys1)</i></div>
<div style="position:absolute;left:9px;top:324px;width:408px;height:18px;background:#d9d9db"></div>
<svg style="position:absolute;left:76px;top:328px;overflow:visible;" width="6" height="10" viewBox="0 0 6 10"><path d="M0.7 0.8 L5 5 L0.7 9.2 Z" fill="#fff" stroke="#9a9a9a" stroke-width="0.9"/></svg>
<svg style="position:absolute;left:89px;top:325px;overflow:visible;" width="16" height="16" viewBox="0 0 16 16"><rect x="0.5" y="0.5" width="15" height="15" fill="#fff" stroke="#4caa4c" stroke-width="1.1"/><path d="M6.6 12.8 V3" stroke="#3688cb" stroke-width="1.1"/><path d="M5.2 4.6 L6.6 2.4 L8 4.6" fill="none" stroke="#3688cb" stroke-width="1"/><path d="M6.6 12.8 L1.6 7.1" stroke="#4caa4c" stroke-width="1"/><path d="M6.6 12.8 L14.8 7.8" stroke="#e0407a" stroke-width="1.1"/></svg>
<div style="position:absolute;left:111px;top:325.0px;line-height:16px;font-size:12px;color:#000;white-space:nowrap;letter-spacing:-0.540px;">View 1</div>
<svg style="position:absolute;left:53.5px;top:346.5px;overflow:visible;" width="8" height="8" viewBox="0 0 8 8"><path d="M7.5 0.5 V7.5 H0.5 Z" fill="#404040"/></svg>
<svg style="position:absolute;left:69px;top:343px;overflow:visible;" width="16" height="16" viewBox="0 0 16 16"><rect x="0.5" y="0.5" width="15" height="15" fill="#fff" stroke="#e8673a" stroke-width="1.1"/><path d="M2.5 14 C5 9.5 6.3 2.5 8.7 2.5 C11 2.5 12 9 14.3 13 M2.2 2.8 C4 9.5 12.5 9.5 14.5 2.8" fill="none" stroke="#e8673a" stroke-width="1.1"/></svg>
<div style="position:absolute;left:91px;top:343.0px;line-height:16px;font-size:12px;color:#000;white-space:nowrap;letter-spacing:-0.310px;">Geometry 1</div>
<svg style="position:absolute;left:73.5px;top:364.5px;overflow:visible;" width="8" height="8" viewBox="0 0 8 8"><path d="M7.5 0.5 V7.5 H0.5 Z" fill="#404040"/></svg>
<svg style="position:absolute;left:89px;top:361px;overflow:visible;" width="16" height="16" viewBox="0 0 16 16"><path d="M3.2 3.5 V14.5 A4.7 1.9 0 0 0 12.6 14.5 V3.5" fill="#fafafa" stroke="#8c8c8c" stroke-width="1"/><ellipse cx="7.9" cy="3.5" rx="4.7" ry="1.9" fill="#fff" stroke="#8c8c8c" stroke-width="1"/><path d="M0.3 5.2 L9.3 5 L15.7 10.9 L6.5 11.2 Z" fill="#e8673a" fill-opacity="0.92"/><path d="M3 7.2 L11.5 7" stroke="#f6b8a0" stroke-width="0.8"/><path d="M3.2 9.5 V14.5 A4.7 1.9 0 0 0 12.6 14.5 V11" fill="none" stroke="#8c8c8c" stroke-width="1"/></svg>
<div style="position:absolute;left:111px;top:361.0px;line-height:16px;font-size:12px;color:#000;white-space:nowrap;letter-spacing:-0.289px;">Work Plane 1<i style="margin-left:6px">(wp1)</i></div>
<svg style="position:absolute;left:93.5px;top:382.5px;overflow:visible;" width="8" height="8" viewBox="0 0 8 8"><path d="M7.5 0.5 V7.5 H0.5 Z" fill="#404040"/></svg>
<svg style="position:absolute;left:109px;top:379px;overflow:visible;" width="16" height="16" viewBox="0 0 16 16"><rect x="0.5" y="0.5" width="15" height="15" fill="#fff" stroke="#4caa4c" stroke-width="1.1"/><path d="M2.5 14 C5 9.5 6.3 2.5 8.7 2.5 C11 2.5 12 9 14.3 13 M2.2 2.8 C4 9.5 12.5 9.5 14.5 2.8" fill="none" stroke="#e8673a" stroke-width="1.1"/></svg>
<div style="position:absolute;left:131px;top:379.0px;line-height:16px;font-size:12px;color:#000;white-space:nowrap;letter-spacing:-0.216px;">Plane Geometry</div>
<svg style="position:absolute;left:129px;top:397px;overflow:visible;" width="16" height="16" viewBox="0 0 16 16"><rect x="2" y="3" width="11.5" height="11.5" fill="#e0e3e3" stroke="#e8673a" stroke-width="1.1"/><rect x="0.2" y="13" width="3" height="3" fill="#e8673a"/></svg>
<div style="position:absolute;left:151px;top:397.0px;line-height:16px;font-size:12px;color:#000;white-space:nowrap;letter-spacing:-0.570px;">Square 1<i style="margin-left:6px">(sq1)</i></div>
<svg style="position:absolute;left:129px;top:415px;overflow:visible;" width="16" height="16" viewBox="0 0 16 16"><rect x="2" y="3" width="11.5" height="11.5" fill="#e0e3e3" stroke="#e8673a" stroke-width="1.1"/><rect x="0.2" y="13" width="3" height="3" fill="#e8673a"/></svg>
<div style="position:absolute;left:151px;top:415.0px;line-height:16px;font-size:12px;color:#000;white-space:nowrap;letter-spacing:-0.570px;">Square 2<i style="margin-left:6px">(sq2)</i></div>
<svg style="position:absolute;left:129px;top:433px;overflow:visible;" width="16" height="16" viewBox="0 0 16 16"><rect x="0.8" y="3" width="11.8" height="9" fill="#f6b8a0" stroke="#e8673a" stroke-width="1.1"/><rect x="3.9" y="6.7" width="11.6" height="9" fill="#f6b8a0" stroke="#e8673a" stroke-width="1.1"/><rect x="4.4" y="7.2" width="7.7" height="4.3" fill="#f2a283"/></svg>
<div style="position:absolute;left:151px;top:433.0px;line-height:16px;font-size:12px;color:#000;white-space:nowrap;letter-spacing:-0.170px;">Union 1<i style="margin-left:6px">(uni1)</i></div>
<svg style="position:absolute;left:129px;top:451px;overflow:visible;" width="16" height="16" viewBox="0 0 16 16"><rect x="2" y="3" width="11.5" height="11.5" fill="#e0e3e3" stroke="#e8673a" stroke-width="1.1"/><rect x="0.2" y="13" width="3" height="3" fill="#e8673a"/></svg>
<div style="position:absolute;left:151px;top:451.0px;line-height:16px;font-size:12px;color:#000;white-space:nowrap;letter-spacing:-0.570px;">Square 3<i style="margin-left:6px">(sq3)</i></div>
<svg style="position:absolute;left:129px;top:469px;overflow:visible;" width="16" height="16" viewBox="0 0 16 16"><rect x="2" y="3" width="11.5" height="11.5" fill="#e0e3e3" stroke="#e8673a" stroke-width="1.1"/><rect x="0.2" y="13" width="3" height="3" fill="#e8673a"/></svg>
<div style="position:absolute;left:151px;top:469.0px;line-height:16px;font-size:12px;color:#000;white-space:nowrap;letter-spacing:-0.570px;">Square 4<i style="margin-left:6px">(sq4)</i></div>
<svg style="position:absolute;left:129px;top:487px;overflow:visible;" width="16" height="16" viewBox="0 0 16 16"><rect x="0.8" y="3" width="11.8" height="9" fill="#f6b8a0" stroke="#e8673a" stroke-width="1.1"/><rect x="3.9" y="6.7" width="11.6" height="9" fill="#f6b8a0" stroke="#e8673a" stroke-width="1.1"/><rect x="4.4" y="7.2" width="7.7" height="4.3" fill="#f2a283"/></svg>
<div style="position:absolute;left:151px;top:487.0px;line-height:16px;font-size:12px;color:#000;white-space:nowrap;letter-spacing:-0.170px;">Union 2<i style="margin-left:6px">(uni2)</i></div>
<svg style="position:absolute;left:129px;top:505px;overflow:visible;" width="16" height="16" viewBox="0 0 16 16"><path d="M0.5 13 C2.5 5.5 8.5 9.5 10.3 0.8" fill="none" stroke="#8e8e8e" stroke-width="1.2"/><path d="M4 15 C6 7.5 12 11 14.1 2.6" fill="none" stroke="#e8673a" stroke-width="1.2"/></svg>
<div style="position:absolute;left:151px;top:505.0px;line-height:16px;font-size:12px;color:#000;white-space:nowrap;letter-spacing:-0.178px;">Offset 1<i style="margin-left:6px">(off1)</i></div>
<svg style="position:absolute;left:129px;top:523px;overflow:visible;" width="16" height="16" viewBox="0 0 16 16"><rect x="0.5" y="0.5" width="15" height="15" fill="#fff" stroke="#4caa4c" stroke-width="1.1"/><path d="M2.8 9 L5.2 10.6 L1.5 13.8 Z" fill="#8a8a8a"/><path d="M4.2 8.6 L13.4 2.9" stroke="#e8673a" stroke-width="3.8"/><path d="M4.6 8.6 L13 3.4" stroke="#fff" stroke-width="0.7"/></svg>
<div style="position:absolute;left:151px;top:523.0px;line-height:16px;font-size:12px;color:#000;white-space:nowrap;letter-spacing:-0.355px;">Split 1<i style="margin-left:6px">(spl1)</i></div>
<svg style="position:absolute;left:96px;top:544px;overflow:visible;" width="6" height="10" viewBox="0 0 6 10"><path d="M0.7 0.8 L5 5 L0.7 9.2 Z" fill="#fff" stroke="#9a9a9a" stroke-width="0.9"/></svg>
<svg style="position:absolute;left:109px;top:541px;overflow:visible;" width="16" height="16" viewBox="0 0 16 16"><path d="M2.5 1 V13.5 H15" fill="none" stroke="#4caa4c" stroke-width="1"/><path d="M2.5 13.5 H15" stroke="#e0407a" stroke-width="1"/><path d="M1.3 2.5 L2.5 0.5 L3.7 2.5 Z" fill="#4caa4c"/><path d="M13.5 12.3 L15.5 13.5 L13.5 14.7 Z" fill="#e0407a"/><text x="5" y="9" font-family="Liberation Sans, sans-serif" font-size="9" fill="#8a8a8a">xy</text></svg>
<div style="position:absolute;left:131px;top:541.0px;line-height:16px;font-size:12px;color:#000;white-space:nowrap;letter-spacing:-0.420px;">View 2</div>
<svg style="position:absolute;left:89px;top:559px;overflow:visible;" width="16" height="16" viewBox="0 0 16 16"><rect x="0.5" y="1.8" width="13.2" height="9.8" fill="#f0f0f0" stroke="#8a8a8a" stroke-width="1"/><path d="M4 3.4 H8.6 L15.5 9.8 V14.4 H11 L4 8 Z" fill="#fff" stroke="#e8673a" stroke-width="1.1"/><path d="M4 8 H8.6 V3.4 M8.6 8 L11 9.8" fill="none" stroke="#e8673a" stroke-width="0.9"/><rect x="11" y="9.8" width="4.5" height="4.6" fill="#f6b8a0" stroke="#e8673a" stroke-width="1"/></svg>
<div style="position:absolute;left:111px;top:559.0px;line-height:16px;font-size:12px;color:#000;white-space:nowrap;letter-spacing:-0.424px;">Extrude 1<i style="margin-left:6px">(ext1)</i></div>
<svg style="position:absolute;left:89px;top:577px;overflow:visible;" width="16" height="16" viewBox="0 0 16 16"><path d="M0.6 2.8 L7 8.2 L4 13.8 M9.4 2.8 L15.6 8.2 L12.4 13.8" fill="none" stroke="#8e8e8e" stroke-width="0.9"/><ellipse cx="5" cy="2.8" rx="4.2" ry="1.7" fill="#fff" stroke="#e8673a" stroke-width="1.4"/><ellipse cx="11.3" cy="8.2" rx="4.1" ry="1.7" fill="#fff" stroke="#e8673a" stroke-width="1.4"/><ellipse cx="8.2" cy="13.8" rx="4.1" ry="1.7" fill="#fff" stroke="#e8673a" stroke-width="1.4"/></svg>
<div style="position:absolute;left:111px;top:577.0px;line-height:16px;font-size:12px;color:#000;white-space:nowrap;letter-spacing:-0.125px;">Loft 1<i style="margin-left:6px">(loft1)</i></div>
<svg style="position:absolute;left:89px;top:595px;overflow:visible;" width="16" height="16" viewBox="0 0 16 16"><path d="M0.6 2.8 L7 8.2 L4 13.8 M9.4 2.8 L15.6 8.2 L12.4 13.8" fill="none" stroke="#8e8e8e" stroke-width="0.9"/><ellipse cx="5" cy="2.8" rx="4.2" ry="1.7" fill="#fff" stroke="#e8673a" stroke-width="1.4"/><ellipse cx="11.3" cy="8.2" rx="4.1" ry="1.7" fill="#fff" stroke="#e8673a" stroke-width="1.4"/><ellipse cx="8.2" cy="13.8" rx="4.1" ry="1.7" fill="#fff" stroke="#e8673a" stroke-width="1.4"/></svg>
<div style="position:absolute;left:111px;top:595.0px;line-height:16px;font-size:12px;color:#000;white-space:nowrap;letter-spacing:-0.125px;">Loft 2<i style="margin-left:6px">(loft2)</i></div>
<svg style="position:absolute;left:89px;top:613px;overflow:visible;" width="16" height="16" viewBox="0 0 16 16"><rect x="0.8" y="3" width="11.8" height="9" fill="#f6b8a0" stroke="#e8673a" stroke-width="1.1"/><rect x="3.9" y="6.7" width="11.6" height="9" fill="#f6b8a0" stroke="#e8673a" stroke-width="1.1"/><rect x="4.4" y="7.2" width="7.7" height="4.3" fill="#f2a283"/></svg>
<div style="position:absolute;left:111px;top:613.0px;line-height:16px;font-size:12px;color:#000;white-space:nowrap;letter-spacing:-0.162px;">Union 1<i style="margin-left:6px">(uni1)</i></div>
<svg style="position:absolute;left:89px;top:631px;overflow:visible;" width="16" height="16" viewBox="0 0 16 16"><path d="M1 4.5 L8 1 L15 4.5 V12 L8 15.5 L1 12 Z" fill="#e0e4e4" stroke="#e8673a" stroke-width="1.3" stroke-linejoin="round"/><path d="M1 4.5 L8 1 L15 4.5 L8 7.8 Z" fill="#f0f2f2"/><path d="M1 4.5 L8 7.8 L15 4.5 M8 7.8 V15.5" fill="none" stroke="#e8673a" stroke-width="1.2"/><path d="M1 4.5 L8 1 L15 4.5" fill="none" stroke="#e8673a" stroke-width="1.3" stroke-linejoin="round"/></svg>
<div style="position:absolute;left:111px;top:631.0px;line-height:16px;font-size:12px;color:#000;white-space:nowrap;letter-spacing:-0.280px;">Block 1<i style="margin-left:6px">(blk1)</i></div>
<svg style="position:absolute;left:89px;top:649px;overflow:visible;" width="16" height="16" viewBox="0 0 16 16"><rect x="0.5" y="0.5" width="15" height="15" fill="#fff" stroke="#4caa4c" stroke-width="1.1"/><rect x="3.6" y="9.5" width="11" height="5" fill="#f6b8a0"/><path d="M3.6 10.5 V14.5 H14.6" fill="none" stroke="#e8673a" stroke-width="0.9"/><rect x="3" y="5" width="10.2" height="5.5" fill="#fff" stroke="#6a6a6a" stroke-width="1.1"/><path d="M1.6 10.5 H3 M13.2 2 V5" stroke="#6a6a6a" stroke-width="1.1"/></svg>
<div style="position:absolute;left:111px;top:649.0px;line-height:16px;font-size:12px;color:#000;white-space:nowrap;letter-spacing:-0.142px;">Difference 1<i style="margin-left:6px">(dif1)</i></div>
<svg style="position:absolute;left:89px;top:667px;overflow:visible;" width="16" height="16" viewBox="0 0 16 16"><rect x="0.5" y="1.5" width="12.3" height="8.8" fill="#e6e6e6" stroke="#d2d2d2" stroke-width="1"/><rect x="3.5" y="5.8" width="11.8" height="8.8" fill="#e6e6e6" stroke="#d2d2d2" stroke-width="1"/><path d="M15.5 10 V14.8 H10.2 Z" fill="#e8673a"/></svg>
<div style="position:absolute;left:111px;top:667.0px;line-height:16px;font-size:12px;color:#000;white-space:nowrap;letter-spacing:-0.032px;">Form Union<i style="margin-left:6px">(fin)</i></div>
<svg style="position:absolute;left:69px;top:685px;overflow:visible;" width="16" height="16" viewBox="0 0 16 16"><g fill="#f9a11c"><rect x="1" y="4.2" width="3.5" height="3.5"/><rect x="6.3" y="1.3" width="3.6" height="3.5"/><rect x="11.6" y="4.2" width="3.6" height="3.5"/></g><g fill="#f08c18"><rect x="1" y="9.5" width="3.5" height="3.5"/><rect x="6.3" y="6.3" width="3.6" height="3.6"/></g><g fill="#c8701a"><rect x="11.6" y="9.5" width="3.6" height="3.5"/><rect x="6.3" y="11.4" width="3.6" height="3.3"/></g></svg>
<div style="position:absolute;left:91px;top:685.0px;line-height:16px;font-size:12px;color:#000;white-space:nowrap;letter-spacing:-0.110px;">Materials</div>
<svg style="position:absolute;left:56px;top:706px;overflow:visible;" width="6" height="10" viewBox="0 0 6 10"><path d="M0.7 0.8 L5 5 L0.7 9.2 Z" fill="#fff" stroke="#9a9a9a" stroke-width="0.9"/></svg>
<svg style="position:absolute;left:69px;top:703px;overflow:visible;" width="16" height="16" viewBox="0 0 16 16"><path d="M1 1.3 L13.3 7.6 L8.9 8.9 L15.2 15.2 L2.6 8.6 L7 7.35 Z" fill="#4a80c8"/></svg>
<div style="position:absolute;left:91px;top:703.0px;line-height:16px;font-size:12px;color:#000;white-space:nowrap;letter-spacing:-0.354px;">Electrostatics<i style="margin-left:6px">(es)</i></div>
<svg style="position:absolute;left:69px;top:721px;overflow:visible;" width="16" height="16" viewBox="0 0 16 16"><path d="M8 1.5 L15 14.5 H1 Z" fill="#e0e0e0" stroke="#8a8a8a" stroke-width="1"/><path d="M4.5 8 H11.5 L8 14.5 Z M8 1.5 L4.5 8 M6.2 11 H9.8 M4.5 8 L3 14.5 M11.5 8 L13 14.5 M8 8 L6.2 11 M8 8 L9.8 11" fill="none" stroke="#8a8a8a" stroke-width="0.8"/></svg>
<div style="position:absolute;left:91px;top:721.0px;line-height:16px;font-size:12px;color:#000;white-space:nowrap;letter-spacing:-0.470px;">Mesh 1</div>
<svg style="position:absolute;left:36px;top:742px;overflow:visible;" width="6" height="10" viewBox="0 0 6 10"><path d="M0.7 0.8 L5 5 L0.7 9.2 Z" fill="#fff" stroke="#9a9a9a" stroke-width="0.9"/></svg>
<svg style="position:absolute;left:49px;top:739px;overflow:visible;" width="16" height="16" viewBox="0 0 16 16"><path d="M0 7.6 Q2.3 2.8 4.5 7 T8.7 8.9" fill="none" stroke="#1a9cc8" stroke-width="1.2"/><circle cx="10.7" cy="8.4" r="2" fill="none" stroke="#1a9cc8" stroke-width="1.2"/><circle cx="14.3" cy="8.4" r="2" fill="none" stroke="#1a9cc8" stroke-width="1.2"/></svg>
<div style="position:absolute;left:71px;top:739.0px;line-height:16px;font-size:12px;color:#000;white-space:nowrap;letter-spacing:-0.432px;">Study 1</div>
<svg style="position:absolute;left:36px;top:760px;overflow:visible;" width="6" height="10" viewBox="0 0 6 10"><path d="M0.7 0.8 L5 5 L0.7 9.2 Z" fill="#fff" stroke="#9a9a9a" stroke-width="0.9"/></svg>
<svg style="position:absolute;left:49px;top:757px;overflow:visible;" width="16" height="16" viewBox="0 0 16 16"><path d="M1 3 L4 1.5 V13 L1 11.5 Z" fill="#b0b0b0" stroke="#7a7a7a" stroke-width="0.8"/><rect x="3.5" y="1.5" width="10" height="9" fill="#f0f0f0" stroke="#7a7a7a" stroke-width="1"/><rect x="5" y="3.5" width="10" height="9" fill="#f0f0f0" stroke="#7a7a7a" stroke-width="1"/><rect x="6.5" y="5.5" width="9" height="8.5" fill="#fff" stroke="#7a7a7a" stroke-width="1"/><rect x="8" y="7" width="6" height="5.5" fill="#c044a0"/><path d="M4 15 H16" stroke="#7a7a7a" stroke-width="1"/></svg>
<div style="position:absolute;left:71px;top:757.0px;line-height:16px;font-size:12px;color:#000;white-space:nowrap;letter-spacing:-0.552px;">Results</div>
<div style="position:absolute;left:427px;top:141px;width:424px;height:988px;border:1px solid #d4d4d4;box-sizing:border-box;background:#fff"></div>
<div style="position:absolute;left:428px;top:170px;width:422px;height:1px;background:#d4d4d4"></div>
<div style="position:absolute;left:432px;top:147px;width:56px;height:24px;border:1px solid #d4d4d4;border-bottom:none;box-sizing:border-box;background:#fff"></div>
<div style="position:absolute;left:437px;top:151.5px;line-height:17px;font-size:13px;color:#2f5fa8;white-space:nowrap;letter-spacing:-0.282px;">Settings</div>
<div style="position:absolute;left:496px;top:147px;width:88px;height:23px;background:#ececec"></div>
<div style="position:absolute;left:500.4px;top:150.5px;line-height:17px;font-size:13px;color:#000;white-space:nowrap;letter-spacing:-0.017px;">Properties</div>
<svg style="position:absolute;left:567px;top:154px;overflow:visible;" width="9" height="9" viewBox="0 0 9 9"><path d="M0.5 0.5 L8.5 8.5 M8.5 0.5 L0.5 8.5" stroke="#c4c4c4" stroke-width="1"/></svg>
<svg style="position:absolute;left:823.8px;top:158.5px;overflow:visible;" width="8.4" height="4.5" viewBox="0 0 8.4 4.5"><path d="M0 0 H8.4 L4.2 4.5 Z" fill="#555"/></svg>
<svg style="position:absolute;left:837px;top:155px;overflow:visible;" width="11" height="12" viewBox="0 0 11 12"><path d="M3 0.5 H8 V5 L9.5 7 H1.5 L3 5 Z" fill="#555"/><path d="M5.5 7 V10.3" stroke="#555" stroke-width="1.2"/></svg>
<div style="position:absolute;left:434px;top:178.5px;line-height:20px;font-size:15px;color:#2c5aa6;white-space:nowrap;letter-spacing:-0.681px;-webkit-text-stroke:0.25px #fff;">View</div>
<div style="position:absolute;left:433.3px;top:210.5px;line-height:16px;font-size:12px;color:#000;white-space:nowrap;letter-spacing:-0.519px;">Label:</div>
<div style="position:absolute;left:474px;top:209px;width:342px;height:19px;border:1px solid #c8c8c8;box-sizing:border-box;background:#fff"></div>
<div style="position:absolute;left:477.2px;top:210.0px;line-height:16px;font-size:12px;color:#000;white-space:nowrap;letter-spacing:-0.500px;">View 1</div>
<div style="position:absolute;left:824px;top:207px;width:21px;height:23px;border:1px solid #d0d0d0;box-sizing:border-box;background:#ececec;border-radius:2px"></div>
<svg style="position:absolute;left:826px;top:209px;overflow:visible;" width="16" height="17" viewBox="0 0 16 17"><rect x="1.5" y="1.7" width="13.3" height="12.8" fill="#fff" stroke="#6e6e6e" stroke-width="1.1"/><rect x="2" y="2.2" width="12.3" height="2.4" fill="#d4d4d4"/><path d="M2 4.8 H14.3" stroke="#6e6e6e" stroke-width="1"/><path d="M4.8 7.4 H12.2 M4.8 9.6 H12.2" stroke="#18a98a" stroke-width="1.1"/><rect x="0" y="10.5" width="4.6" height="5.5" fill="#ececec"/><path d="M0.3 15.7 L3.6 12.2" stroke="#18a98a" stroke-width="1.5"/><path d="M0.8 11.3 H4.4 V15 Z" fill="#18a98a"/></svg>
<div style="position:absolute;left:428px;top:239px;width:422px;height:25px;background:#ececec"></div>
<svg style="position:absolute;left:433px;top:249px;overflow:visible;" width="9" height="5" viewBox="0 0 9 5"><path d="M0 0 H9 L4.5 5 Z" fill="#333"/></svg>
<div style="position:absolute;left:454.3px;top:243.0px;line-height:17px;font-size:13px;color:#000;white-space:nowrap;letter-spacing:-0.481px;">View</div>
<div style="position:absolute;left:434px;top:273.5px;width:13px;height:13px;border:1px solid #6a6a6a;box-sizing:border-box;background:#f1f1f1"></div>
<div style="position:absolute;left:453.3px;top:271.5px;line-height:16px;font-size:12px;color:#000;white-space:nowrap;letter-spacing:-0.054px;">Wireframe rendering</div>
<div style="position:absolute;left:434px;top:294.5px;width:13px;height:13px;border:1px solid #6a6a6a;box-sizing:border-box;background:#f1f1f1"></div>
<div style="position:absolute;left:453.3px;top:292.5px;line-height:16px;font-size:12px;color:#000;white-space:nowrap;letter-spacing:-0.130px;">Show geometry labels</div>
<div style="position:absolute;left:434px;top:315.5px;width:13px;height:13px;border:1px solid #6a6a6a;box-sizing:border-box;background:#f1f1f1"></div>
<div style="position:absolute;left:453.3px;top:313.5px;line-height:16px;font-size:12px;color:#000;white-space:nowrap;letter-spacing:-0.091px;">Show edge direction arrows</div>
<div style="position:absolute;left:434px;top:336.5px;width:13px;height:13px;border:1px solid #6a6a6a;box-sizing:border-box;background:#f1f1f1"></div>
<svg style="position:absolute;left:434px;top:336.5px;overflow:visible;" width="13" height="13" viewBox="0 0 13 13"><path d="M2.6 6.8 L5.4 9.8 L10.6 3" fill="none" stroke="#1a1a1a" stroke-width="1.9"/></svg>
<div style="position:absolute;left:453.3px;top:334.5px;line-height:16px;font-size:12px;color:#000;white-space:nowrap;letter-spacing:-0.120px;">Show grid</div>
<div style="position:absolute;left:434px;top:357.5px;width:13px;height:13px;border:1px solid #6a6a6a;box-sizing:border-box;background:#f1f1f1"></div>
<svg style="position:absolute;left:434px;top:357.5px;overflow:visible;" width="13" height="13" viewBox="0 0 13 13"><path d="M2.6 6.8 L5.4 9.8 L10.6 3" fill="none" stroke="#1a1a1a" stroke-width="1.9"/></svg>
<div style="position:absolute;left:453.3px;top:355.5px;line-height:16px;font-size:12px;color:#000;white-space:nowrap;letter-spacing:-0.060px;">Mesh rendering</div>
<div style="position:absolute;left:434px;top:378.5px;width:13px;height:13px;border:1px solid #6a6a6a;box-sizing:border-box;background:#f1f1f1"></div>
<svg style="position:absolute;left:434px;top:378.5px;overflow:visible;" width="13" height="13" viewBox="0 0 13 13"><path d="M2.6 6.8 L5.4 9.8 L10.6 3" fill="none" stroke="#1a1a1a" stroke-width="1.9"/></svg>
<div style="position:absolute;left:453.3px;top:376.5px;line-height:16px;font-size:12px;color:#000;white-space:nowrap;letter-spacing:-0.093px;">Show axis orientation</div>
<div style="position:absolute;left:434px;top:399.5px;width:13px;height:13px;border:1px solid #6a6a6a;box-sizing:border-box;background:#f1f1f1"></div>
<svg style="position:absolute;left:434px;top:399.5px;overflow:visible;" width="13" height="13" viewBox="0 0 13 13"><path d="M2.6 6.8 L5.4 9.8 L10.6 3" fill="none" stroke="#1a1a1a" stroke-width="1.9"/></svg>
<div style="position:absolute;left:453.3px;top:397.5px;line-height:16px;font-size:12px;color:#000;white-space:nowrap;letter-spacing:-0.212px;">Show axis units</div>
<div style="position:absolute;left:434px;top:420.5px;width:13px;height:13px;border:1px solid #6a6a6a;box-sizing:border-box;background:#f1f1f1"></div>
<div style="position:absolute;left:453.3px;top:418.5px;line-height:16px;font-size:12px;color:#000;white-space:nowrap;letter-spacing:-0.260px;">Lock camera</div>
<div style="position:absolute;left:434px;top:441.5px;width:13px;height:13px;border:1px solid #6a6a6a;box-sizing:border-box;background:#f1f1f1"></div>
<div style="position:absolute;left:453.3px;top:439.5px;line-height:16px;font-size:12px;color:#000;white-space:nowrap;letter-spacing:0.032px;">Lock rotation center</div>
<div style="position:absolute;left:428px;top:467px;width:422px;height:25px;background:#ececec"></div>
<svg style="position:absolute;left:435px;top:474px;overflow:visible;" width="6" height="10" viewBox="0 0 6 10"><path d="M0.7 0.8 L5 5 L0.7 9.2 Z" fill="#fff" stroke="#9a9a9a" stroke-width="0.9"/></svg>
<div style="position:absolute;left:454.3px;top:471.0px;line-height:17px;font-size:13px;color:#000;white-space:nowrap;letter-spacing:-0.123px;">Light</div>
<div style="position:absolute;left:428px;top:494px;width:422px;height:25px;background:#ececec"></div>
<svg style="position:absolute;left:435px;top:501px;overflow:visible;" width="6" height="10" viewBox="0 0 6 10"><path d="M0.7 0.8 L5 5 L0.7 9.2 Z" fill="#fff" stroke="#9a9a9a" stroke-width="0.9"/></svg>
<div style="position:absolute;left:454.3px;top:498.0px;line-height:17px;font-size:13px;color:#000;white-space:nowrap;letter-spacing:-0.215px;">Visual Effects</div>
<div style="position:absolute;left:428px;top:521px;width:422px;height:25px;background:#ececec"></div>
<svg style="position:absolute;left:435px;top:528px;overflow:visible;" width="6" height="10" viewBox="0 0 6 10"><path d="M0.7 0.8 L5 5 L0.7 9.2 Z" fill="#fff" stroke="#9a9a9a" stroke-width="0.9"/></svg>
<div style="position:absolute;left:454.3px;top:525.0px;line-height:17px;font-size:13px;color:#000;white-space:nowrap;letter-spacing:-0.158px;">Environment</div>
<div style="position:absolute;left:428px;top:548px;width:422px;height:25px;background:#ececec"></div>
<svg style="position:absolute;left:433px;top:558px;overflow:visible;" width="9" height="5" viewBox="0 0 9 5"><path d="M0 0 H9 L4.5 5 Z" fill="#333"/></svg>
<div style="position:absolute;left:454.3px;top:552.0px;line-height:17px;font-size:13px;color:#000;white-space:nowrap;letter-spacing:-0.209px;">Transparency</div>
<div style="position:absolute;left:431px;top:590px;width:416px;height:164px;border:1px solid #d6d6d6;box-sizing:border-box"></div>
<div style="position:absolute;left:438px;top:582px;width:92px;height:15px;background:#fff"></div>
<div style="position:absolute;left:440px;top:583.0px;width:13px;height:13px;border:1px solid #6a6a6a;box-sizing:border-box;background:#f1f1f1"></div>
<svg style="position:absolute;left:440px;top:583.0px;overflow:visible;" width="13" height="13" viewBox="0 0 13 13"><path d="M2.6 6.8 L5.4 9.8 L10.6 3" fill="none" stroke="#1a1a1a" stroke-width="1.9"/></svg>
<div style="position:absolute;left:459.8px;top:581.0px;line-height:16px;font-size:12px;color:#000;white-space:nowrap;letter-spacing:-0.438px;">Transparency</div>
<div style="position:absolute;left:440.5px;top:605.0px;line-height:16px;font-size:12px;color:#000;white-space:nowrap;letter-spacing:-0.421px;">Transparency:</div>
<div style="position:absolute;left:522px;top:603px;width:316px;height:19px;border:1px solid #c8c8c8;box-sizing:border-box;background:#fff"></div>
<div style="position:absolute;left:526px;top:604.0px;line-height:16px;font-size:12px;color:#000;white-space:nowrap;">0.5</div>
<svg style="position:absolute;left:445px;top:628px;overflow:visible;" width="389" height="3" viewBox="0 0 389 3"><rect x="0.0" y="0" width="1" height="3" fill="#222"/><rect x="19.4" y="0" width="1" height="3" fill="#222"/><rect x="38.8" y="0" width="1" height="3" fill="#222"/><rect x="58.2" y="0" width="1" height="3" fill="#222"/><rect x="77.6" y="0" width="1" height="3" fill="#222"/><rect x="97.0" y="0" width="1" height="3" fill="#222"/><rect x="116.4" y="0" width="1" height="3" fill="#222"/><rect x="135.8" y="0" width="1" height="3" fill="#222"/><rect x="155.2" y="0" width="1" height="3" fill="#222"/><rect x="174.6" y="0" width="1" height="3" fill="#222"/><rect x="194.0" y="0" width="1" height="3" fill="#222"/><rect x="213.4" y="0" width="1" height="3" fill="#222"/><rect x="232.8" y="0" width="1" height="3" fill="#222"/><rect x="252.2" y="0" width="1" height="3" fill="#222"/><rect x="271.6" y="0" width="1" height="3" fill="#222"/><rect x="291.0" y="0" width="1" height="3" fill="#222"/><rect x="310.4" y="0" width="1" height="3" fill="#222"/><rect x="329.8" y="0" width="1" height="3" fill="#222"/><rect x="349.2" y="0" width="1" height="3" fill="#222"/><rect x="368.6" y="0" width="1" height="3" fill="#222"/><rect x="388.0" y="0" width="1" height="3" fill="#222"/></svg>
<div style="position:absolute;left:445px;top:641px;width:388px;height:3px;background:#e7e7e7;border:1px solid #d8d8d8;box-sizing:border-box"></div>
<div style="position:absolute;left:634px;top:634px;width:11px;height:18px;background:#e6e6e6;border:1px solid #d0d0d0;box-sizing:border-box"></div>
<svg style="position:absolute;left:445px;top:654px;overflow:visible;" width="389" height="3" viewBox="0 0 389 3"><rect x="0.0" y="0" width="1" height="3" fill="#222"/><rect x="19.4" y="0" width="1" height="3" fill="#222"/><rect x="38.8" y="0" width="1" height="3" fill="#222"/><rect x="58.2" y="0" width="1" height="3" fill="#222"/><rect x="77.6" y="0" width="1" height="3" fill="#222"/><rect x="97.0" y="0" width="1" height="3" fill="#222"/><rect x="116.4" y="0" width="1" height="3" fill="#222"/><rect x="135.8" y="0" width="1" height="3" fill="#222"/><rect x="155.2" y="0" width="1" height="3" fill="#222"/><rect x="174.6" y="0" width="1" height="3" fill="#222"/><rect x="194.0" y="0" width="1" height="3" fill="#222"/><rect x="213.4" y="0" width="1" height="3" fill="#222"/><rect x="232.8" y="0" width="1" height="3" fill="#222"/><rect x="252.2" y="0" width="1" height="3" fill="#222"/><rect x="271.6" y="0" width="1" height="3" fill="#222"/><rect x="291.0" y="0" width="1" height="3" fill="#222"/><rect x="310.4" y="0" width="1" height="3" fill="#222"/><rect x="329.8" y="0" width="1" height="3" fill="#222"/><rect x="349.2" y="0" width="1" height="3" fill="#222"/><rect x="368.6" y="0" width="1" height="3" fill="#222"/><rect x="388.0" y="0" width="1" height="3" fill="#222"/></svg>
<div style="position:absolute;left:438px;top:672px;width:402px;height:75px;border:1px solid #d6d6d6;box-sizing:border-box"></div>
<div style="position:absolute;left:445px;top:664px;width:137px;height:15px;background:#fff"></div>
<div style="position:absolute;left:447px;top:665.0px;width:13px;height:13px;border:1px solid #6a6a6a;box-sizing:border-box;background:#f1f1f1"></div>
<div style="position:absolute;left:466.3px;top:663.0px;line-height:16px;font-size:12px;color:#000;white-space:nowrap;letter-spacing:-0.144px;">Fresnel transmittance</div>
<div style="position:absolute;left:447.3px;top:687.0px;line-height:16px;font-size:12px;color:#8a8a8a;white-space:nowrap;letter-spacing:-0.524px;">Level:</div>
<div style="position:absolute;left:487px;top:685px;width:344px;height:19px;border:1px solid #dedede;box-sizing:border-box;background:#fff"></div>
<div style="position:absolute;left:491px;top:686.0px;line-height:16px;font-size:12px;color:#8a8a8a;white-space:nowrap;">0.5</div>
<svg style="position:absolute;left:452px;top:710.5px;overflow:visible;" width="374.5" height="3" viewBox="0 0 374.5 3"><rect x="0.0" y="0" width="1" height="3" fill="#555"/><rect x="18.7" y="0" width="1" height="3" fill="#555"/><rect x="37.4" y="0" width="1" height="3" fill="#555"/><rect x="56.0" y="0" width="1" height="3" fill="#555"/><rect x="74.7" y="0" width="1" height="3" fill="#555"/><rect x="93.4" y="0" width="1" height="3" fill="#555"/><rect x="112.0" y="0" width="1" height="3" fill="#555"/><rect x="130.7" y="0" width="1" height="3" fill="#555"/><rect x="149.4" y="0" width="1" height="3" fill="#555"/><rect x="168.1" y="0" width="1" height="3" fill="#555"/><rect x="186.8" y="0" width="1" height="3" fill="#555"/><rect x="205.4" y="0" width="1" height="3" fill="#555"/><rect x="224.1" y="0" width="1" height="3" fill="#555"/><rect x="242.8" y="0" width="1" height="3" fill="#555"/><rect x="261.5" y="0" width="1" height="3" fill="#555"/><rect x="280.1" y="0" width="1" height="3" fill="#555"/><rect x="298.8" y="0" width="1" height="3" fill="#555"/><rect x="317.5" y="0" width="1" height="3" fill="#555"/><rect x="336.1" y="0" width="1" height="3" fill="#555"/><rect x="354.8" y="0" width="1" height="3" fill="#555"/><rect x="373.5" y="0" width="1" height="3" fill="#555"/></svg>
<div style="position:absolute;left:452px;top:724px;width:374px;height:3px;background:#f0f0f0;border:1px solid #e4e4e4;box-sizing:border-box"></div>
<div style="position:absolute;left:633px;top:716.5px;width:11px;height:18px;background:#f0f0f0;border:1px solid #e0e0e0;box-sizing:border-box"></div>
<svg style="position:absolute;left:452px;top:736px;overflow:visible;" width="374.5" height="3" viewBox="0 0 374.5 3"><rect x="0.0" y="0" width="1" height="3" fill="#555"/><rect x="18.7" y="0" width="1" height="3" fill="#555"/><rect x="37.4" y="0" width="1" height="3" fill="#555"/><rect x="56.0" y="0" width="1" height="3" fill="#555"/><rect x="74.7" y="0" width="1" height="3" fill="#555"/><rect x="93.4" y="0" width="1" height="3" fill="#555"/><rect x="112.0" y="0" width="1" height="3" fill="#555"/><rect x="130.7" y="0" width="1" height="3" fill="#555"/><rect x="149.4" y="0" width="1" height="3" fill="#555"/><rect x="168.1" y="0" width="1" height="3" fill="#555"/><rect x="186.8" y="0" width="1" height="3" fill="#555"/><rect x="205.4" y="0" width="1" height="3" fill="#555"/><rect x="224.1" y="0" width="1" height="3" fill="#555"/><rect x="242.8" y="0" width="1" height="3" fill="#555"/><rect x="261.5" y="0" width="1" height="3" fill="#555"/><rect x="280.1" y="0" width="1" height="3" fill="#555"/><rect x="298.8" y="0" width="1" height="3" fill="#555"/><rect x="317.5" y="0" width="1" height="3" fill="#555"/><rect x="336.1" y="0" width="1" height="3" fill="#555"/><rect x="354.8" y="0" width="1" height="3" fill="#555"/><rect x="373.5" y="0" width="1" height="3" fill="#555"/></svg>
<div style="position:absolute;left:428px;top:765px;width:422px;height:25px;background:#ececec"></div>
<svg style="position:absolute;left:433px;top:775px;overflow:visible;" width="9" height="5" viewBox="0 0 9 5"><path d="M0 0 H9 L4.5 5 Z" fill="#333"/></svg>
<div style="position:absolute;left:454.3px;top:769.0px;line-height:17px;font-size:13px;color:#000;white-space:nowrap;letter-spacing:-0.033px;">Colors</div>
<div style="position:absolute;left:434px;top:799.5px;width:13px;height:13px;border:1px solid #6a6a6a;box-sizing:border-box;background:#f1f1f1"></div>
<svg style="position:absolute;left:434px;top:799.5px;overflow:visible;" width="13" height="13" viewBox="0 0 13 13"><path d="M2.6 6.8 L5.4 9.8 L10.6 3" fill="none" stroke="#1a1a1a" stroke-width="1.9"/></svg>
<div style="position:absolute;left:453.3px;top:797.5px;line-height:16px;font-size:12px;color:#000;white-space:nowrap;letter-spacing:-0.128px;">Show selection colors</div>
<div style="position:absolute;left:434px;top:820.5px;width:13px;height:13px;border:1px solid #6a6a6a;box-sizing:border-box;background:#f1f1f1"></div>
<div style="position:absolute;left:453.3px;top:818.5px;line-height:16px;font-size:12px;color:#000;white-space:nowrap;letter-spacing:-0.035px;">Show material color and texture</div>
<div style="position:absolute;left:428px;top:846px;width:422px;height:25px;background:#ececec"></div>
<svg style="position:absolute;left:435px;top:853px;overflow:visible;" width="6" height="10" viewBox="0 0 6 10"><path d="M0.7 0.8 L5 5 L0.7 9.2 Z" fill="#fff" stroke="#9a9a9a" stroke-width="0.9"/></svg>
<div style="position:absolute;left:454.3px;top:850.0px;line-height:17px;font-size:13px;color:#000;white-space:nowrap;letter-spacing:0.046px;">Clipping</div>
<div style="position:absolute;left:856px;top:141px;width:1061px;height:786px;border:1px solid #9fcdf0;box-sizing:border-box;background:#fff"></div>
<div style="position:absolute;left:863.8px;top:148.0px;line-height:26px;font-size:20px;color:#2583e0;white-space:nowrap;letter-spacing:-0.790px;-webkit-text-stroke:0.55px #fff;">Graphics</div>
<svg style="position:absolute;left:1890.1px;top:156.9px;overflow:visible;" width="8.4" height="4.5" viewBox="0 0 8.4 4.5"><path d="M0 0 H8.4 L4.2 4.5 Z" fill="#2f8ad8"/></svg>
<svg style="position:absolute;left:1903px;top:154.7px;overflow:visible;" width="11" height="12" viewBox="0 0 11 12"><path d="M3 0.5 H8 V5 L9.5 7 H1.5 L3 5 Z" fill="#2f8ad8"/><path d="M5.5 7 V10.3" stroke="#2f8ad8" stroke-width="1.2"/></svg>
<svg style="position:absolute;left:865px;top:176px;overflow:visible;" width="15" height="15" viewBox="0 0 15 15"><circle cx="5.8" cy="5.8" r="4.6" fill="#fff" stroke="#3688cb" stroke-width="1.3"/><path d="M9.2 9.2 L13.8 13.8" stroke="#3688cb" stroke-width="2"/><path d="M3.3 5.8 H8.3 M5.8 3.3 V8.3" stroke="#3688cb" stroke-width="1.1"/></svg>
<svg style="position:absolute;left:888px;top:176px;overflow:visible;" width="15" height="15" viewBox="0 0 15 15"><circle cx="5.8" cy="5.8" r="4.6" fill="#fff" stroke="#3688cb" stroke-width="1.3"/><path d="M9.2 9.2 L13.8 13.8" stroke="#3688cb" stroke-width="2"/><path d="M3.3 5.8 H8.3" stroke="#3688cb" stroke-width="1.1"/></svg>
<svg style="position:absolute;left:910px;top:176px;overflow:visible;" width="17" height="15" viewBox="0 0 17 15"><rect x="0.7" y="6.5" width="7" height="7" fill="none" stroke="#3688cb" stroke-width="1" stroke-dasharray="2 1.4"/><circle cx="8.3" cy="5.8" r="4.6" fill="#fff" stroke="#3688cb" stroke-width="1.3"/><path d="M5.8 5.8 H10.8 M8.3 3.3 V8.3" stroke="#3688cb" stroke-width="1.1"/><path d="M11.7 9.2 L16 13.8" stroke="#3688cb" stroke-width="2"/></svg>
<svg style="position:absolute;left:933px;top:182px;overflow:visible;" width="7" height="4" viewBox="0 0 7 4"><path d="M0 0 H7 L3.5 4 Z" fill="#111"/></svg>
<svg style="position:absolute;left:951px;top:175px;overflow:visible;" width="16" height="17" viewBox="0 0 16 17"><rect x="4" y="4.5" width="8" height="8" fill="#fff" stroke="#666" stroke-width="1"/><path d="M5.8 8.5 H10.2 M8 6.3 V10.7" stroke="#666" stroke-width="1"/><path d="M8 0.5 L6.3 2.5 H9.7 Z M8 16.5 L6.3 14.5 H9.7 Z M0 8.5 L2 6.8 V10.2 Z M16 8.5 L14 6.8 V10.2 Z" fill="#3688cb"/></svg>
<svg style="position:absolute;left:974px;top:176px;overflow:visible;" width="15" height="15" viewBox="0 0 15 15"><rect x="0.6" y="0.6" width="13.8" height="13.8" fill="#fff" stroke="#666" stroke-width="1.2"/><path d="M5.3 7.5 H9.7 M7.5 5.3 V9.7" stroke="#666" stroke-width="1"/><path d="M7.5 1.5 L5.8 3.7 H9.2 Z M7.5 13.5 L5.8 11.3 H9.2 Z M1.5 7.5 L3.7 5.8 V9.2 Z M13.5 7.5 L11.3 5.8 V9.2 Z" fill="#3688cb"/></svg>
<div style="position:absolute;left:997px;top:176px;width:1px;height:16px;background:#c4c4c4"></div>
<svg style="position:absolute;left:1004px;top:176px;overflow:visible;" width="18" height="15" viewBox="0 0 18 15"><path d="M7.5 1 V13" stroke="#3688cb" stroke-width="1.1"/><path d="M6 3 L7.5 0.5 L9 3 Z" fill="#3688cb"/><path d="M7.5 13 L1.5 8" stroke="#4caa4c" stroke-width="1.1"/><path d="M0.7 9.5 L0.8 7 L3 7.3" fill="none" stroke="#4caa4c" stroke-width="1"/><path d="M7.5 13 L16 8" stroke="#e0407a" stroke-width="1.1"/><path d="M14 7.5 L16.6 7.6 L15.4 10" fill="none" stroke="#e0407a" stroke-width="1"/></svg>
<svg style="position:absolute;left:1028px;top:182px;overflow:visible;" width="7" height="4" viewBox="0 0 7 4"><path d="M0 0 H7 L3.5 4 Z" fill="#111"/></svg>
<svg style="position:absolute;left:1046px;top:176px;overflow:visible;" width="17" height="16" viewBox="0 0 17 16"><path d="M2.5 1.5 V13.5" stroke="#4caa4c" stroke-width="1.1"/><path d="M2.5 13.5 H14" stroke="#e0407a" stroke-width="1.1"/><path d="M1 3 L2.5 0.3 L4 3 Z" fill="#4caa4c"/><path d="M13 12 L15.7 13.5 L13 15 Z" fill="#e0407a"/><text x="4.5" y="9" font-family="Liberation Sans, sans-serif" font-size="9.5" fill="#8a8a8a">xy</text></svg>
<svg style="position:absolute;left:1069px;top:176px;overflow:visible;" width="17" height="16" viewBox="0 0 17 16"><path d="M2.5 1.5 V13.5" stroke="#3688cb" stroke-width="1.1"/><path d="M2.5 13.5 H14" stroke="#4caa4c" stroke-width="1.1"/><path d="M1 3 L2.5 0.3 L4 3 Z" fill="#3688cb"/><path d="M13 12 L15.7 13.5 L13 15 Z" fill="#4caa4c"/><text x="4.5" y="9" font-family="Liberation Sans, sans-serif" font-size="9.5" fill="#8a8a8a">yz</text></svg>
<svg style="position:absolute;left:1092px;top:176px;overflow:visible;" width="17" height="16" viewBox="0 0 17 16"><path d="M2.5 1.5 V13.5" stroke="#3688cb" stroke-width="1.1"/><path d="M2.5 13.5 H14" stroke="#e0407a" stroke-width="1.1"/><path d="M1 3 L2.5 0.3 L4 3 Z" fill="#3688cb"/><path d="M13 12 L15.7 13.5 L13 15 Z" fill="#e0407a"/><text x="4.5" y="9" font-family="Liberation Sans, sans-serif" font-size="9.5" fill="#8a8a8a">xz</text></svg>
<svg style="position:absolute;left:1115px;top:178px;overflow:visible;" width="16" height="12" viewBox="0 0 16 12"><path d="M0.5 1.2 H4.5 L5.5 0.3 H7.5 V11.7 H5.5 L4.5 10.8 H0.5 Z" fill="#3688cb"/><path d="M8.6 3.8 L14.6 1.4 V10.6 L8.6 8.2 Z" fill="none" stroke="#3688cb" stroke-width="1.5"/></svg>
<div style="position:absolute;left:1138px;top:176px;width:1px;height:16px;background:#c4c4c4"></div>
<svg style="position:absolute;left:1147px;top:176px;overflow:visible;" width="16" height="16" viewBox="0 0 16 16"><path d="M11.5 5.2 A5.8 5.8 0 1 0 13.6 9.5" fill="none" stroke="#3688cb" stroke-width="1.4"/><path d="M8.5 0.5 L14 4 L8.5 7.5 Z" fill="#3688cb"/></svg>
<svg style="position:absolute;left:1168px;top:182px;overflow:visible;" width="7" height="4" viewBox="0 0 7 4"><path d="M0 0 H7 L3.5 4 Z" fill="#111"/></svg>
<div style="position:absolute;left:1186px;top:176px;width:1px;height:16px;background:#c4c4c4"></div>
<svg style="position:absolute;left:1194px;top:176px;overflow:visible;" width="17" height="17" viewBox="0 0 17 17"><rect x="0.6" y="0.6" width="10.6" height="10" rx="2.6" fill="#dcdcdc" stroke="#a8a8a8" stroke-width="1"/><ellipse cx="2.4" cy="5.6" rx="1.6" ry="4.6" fill="none" stroke="#b8b8b8" stroke-width="0.7"/><rect x="4" y="6.2" width="12" height="10" rx="2.6" fill="#3688cb"/></svg>
<svg style="position:absolute;left:1217px;top:182px;overflow:visible;" width="7" height="4" viewBox="0 0 7 4"><path d="M0 0 H7 L3.5 4 Z" fill="#111"/></svg>
<div style="position:absolute;left:1235px;top:176px;width:1px;height:16px;background:#c4c4c4"></div>
<svg style="position:absolute;left:1242px;top:175px;overflow:visible;" width="18" height="15" viewBox="0 0 18 15"><rect x="1" y="3.4" width="16" height="10.2" rx="4" fill="#dedede" stroke="#a4a4a4" stroke-width="1"/><path d="M1.5 8.5 H6" stroke="#a4a4a4" stroke-width="0.9"/><rect x="6.3" y="1.4" width="8.8" height="7.4" fill="#dedede" stroke="#3688cb" stroke-width="1.1" stroke-dasharray="2 1.3"/><rect x="8.2" y="3.3" width="5.1" height="3.7" fill="#3688cb"/></svg>
<svg style="position:absolute;left:1266px;top:182px;overflow:visible;" width="7" height="4" viewBox="0 0 7 4"><path d="M0 0 H7 L3.5 4 Z" fill="#111"/></svg>
<svg style="position:absolute;left:1284px;top:175px;overflow:visible;" width="18" height="15" viewBox="0 0 18 15"><rect x="0.2" y="3.2" width="16.4" height="10.6" rx="4.4" fill="#3688cb"/><rect x="5.4" y="1.4" width="8.8" height="7.4" fill="none" stroke="#fff" stroke-width="1" stroke-dasharray="2 1.3"/><path d="M5.4 3.6 V1.4 H14.2 V3.6" fill="none" stroke="#3688cb" stroke-width="1.1" stroke-dasharray="2 1.3"/><rect x="7.3" y="3.4" width="5.2" height="3.6" fill="#d8d8d8"/></svg>
<svg style="position:absolute;left:1307px;top:182px;overflow:visible;" width="7" height="4" viewBox="0 0 7 4"><path d="M0 0 H7 L3.5 4 Z" fill="#111"/></svg>
<svg style="position:absolute;left:1326px;top:176.7px;overflow:visible;" width="17" height="16" viewBox="0 0 17 16"><rect x="0.8" y="1" width="13" height="12.5" fill="none" stroke="#3688cb" stroke-width="1.2" stroke-dasharray="2.4 1.6"/><rect x="3.5" y="4" width="7.5" height="7" fill="#3688cb"/><path d="M7.2 7.2 L14.2 9.8 L11.8 11.2 L15.8 15.2 L14.6 16.4 L10.6 12.4 L9.4 14.6 Z" fill="#3688cb" stroke="#fff" stroke-width="0.7"/></svg>
<svg style="position:absolute;left:1348px;top:175px;overflow:visible;" width="18" height="17" viewBox="0 0 18 17"><rect x="2.5" y="2.5" width="13" height="12" fill="none" stroke="#3688cb" stroke-width="1.2" stroke-dasharray="2.4 1.6"/><path d="M6 5 H13 V12 Z" fill="#3688cb"/><path d="M1.8 0.8 L6 9.5" stroke="#6a6a6a" stroke-width="1.6"/><path d="M4 9.4 L7.6 8 L12.6 14.6 L9.4 15.2 L8.4 16.6 L5.4 16.6 Z" fill="#f0a850"/><path d="M5.8 10 L7.2 16 M6.8 9.5 L10.2 15" stroke="#f8cf98" stroke-width="0.6"/></svg>
<div style="position:absolute;left:1371px;top:176px;width:1px;height:16px;background:#c4c4c4"></div>
<svg style="position:absolute;left:1379px;top:178px;overflow:visible;" width="16" height="13" viewBox="0 0 16 13"><path d="M1 6.3 C4 1.8 11.5 1.8 15 6.3 C11.5 10.6 4 10.6 1 6.3 Z" fill="none" stroke="#b6b6b6" stroke-width="1.7"/><circle cx="8" cy="6.3" r="2.6" fill="#b6b6b6"/><path d="M3.8 1.5 L12.7 10.8" stroke="#3f88d0" stroke-width="1.2"/></svg>
<svg style="position:absolute;left:1402px;top:175px;overflow:visible;" width="17" height="17" viewBox="0 0 17 17"><path d="M3.6 5.2 A4.4 4.4 0 1 1 8 10" fill="none" stroke="#3688cb" stroke-width="1.5"/><path d="M0.8 3 L3.4 7.2 L6.6 3.6 Z" fill="#3688cb"/><ellipse cx="3.6" cy="14" rx="3.6" ry="1.7" fill="#3688cb"/><circle cx="2.4" cy="14" r="0.7" fill="#cfe4f8"/><circle cx="4.8" cy="14" r="0.7" fill="#cfe4f8"/><ellipse cx="12.2" cy="14" rx="3.2" ry="1.6" fill="#dcdcdc"/><path d="M9.8 11.8 L14.6 16" stroke="#3688cb" stroke-width="1.1"/></svg>
<svg style="position:absolute;left:1425px;top:177px;overflow:visible;" width="16" height="14" viewBox="0 0 16 14"><rect x="0.7" y="0.7" width="14.6" height="12" fill="#fff" stroke="#3688cb" stroke-width="1.2"/><path d="M0.7 3 H15.3" stroke="#3688cb" stroke-width="1.2"/><path d="M3.5 8 C5.5 5 10.5 5 12.5 8 C10.5 10.6 5.5 10.6 3.5 8 Z" fill="none" stroke="#3688cb" stroke-width="1"/><circle cx="8" cy="8" r="1.3" fill="#3688cb"/></svg>
<svg style="position:absolute;left:1448px;top:182px;overflow:visible;" width="7" height="4" viewBox="0 0 7 4"><path d="M0 0 H7 L3.5 4 Z" fill="#111"/></svg>
<div style="position:absolute;left:1466px;top:176px;width:1px;height:16px;background:#c4c4c4"></div>
<svg style="position:absolute;left:1473px;top:175px;overflow:visible;" width="17" height="17" viewBox="0 0 17 17"><path d="M12.6 5.4 H15.7 V14.7 H12.6 Z" fill="#e2e2e2"/><path d="M1.3 2.3 H11.3 V12 H1.3 Z M5.2 5.4 H15.7 V14.7 H5.2 Z M1.3 2.3 L5.2 5.4 M11.3 2.3 L15.7 5.4 M11.3 12 L15.7 14.7 M1.3 12 L5.2 14.7" fill="none" stroke="#7a7a7a" stroke-width="1"/><path d="M7.3 1.4 L12.6 6.3 V16.7 L7.3 11.6 Z" fill="#cfe4f8" fill-opacity="0.35" stroke="#3688cb" stroke-width="1"/></svg>
<svg style="position:absolute;left:1496px;top:182px;overflow:visible;" width="7" height="4" viewBox="0 0 7 4"><path d="M0 0 H7 L3.5 4 Z" fill="#111"/></svg>
<div style="position:absolute;left:1514px;top:176px;width:1px;height:16px;background:#c4c4c4"></div>
<div style="position:absolute;left:1521px;top:175px;width:37px;height:18px;background:#a8d3f5;border:1px solid #3c9be8;border-radius:2px;box-sizing:border-box"></div>
<svg style="position:absolute;left:1524px;top:178px;overflow:visible;" width="14" height="12" viewBox="0 0 14 12"><path d="M0.5 3.5 H3.5 L9.5 0 V12 L3.5 8.5 H0.5 Z" fill="#3688cb"/><path d="M9.5 3.5 A2.8 2.8 0 0 1 9.5 8.5" fill="none" stroke="#3688cb" stroke-width="0.8"/></svg>
<svg style="position:absolute;left:1544px;top:182px;overflow:visible;" width="7" height="4" viewBox="0 0 7 4"><path d="M0 0 H7 L3.5 4 Z" fill="#111"/></svg>
<div style="position:absolute;left:1562px;top:175px;width:37px;height:18px;background:#a8d3f5;border:1px solid #3c9be8;border-radius:2px;box-sizing:border-box"></div>
<svg style="position:absolute;left:1565px;top:177px;overflow:visible;" width="15" height="14" viewBox="0 0 15 14"><path d="M0.8 1 H10.5 V10 H0.8 Z M0.8 1 L3.5 3.5 M10.5 1 L13.5 3.5 M10.5 10 L13.5 12.8 M0.8 10 L3.5 12.8" fill="none" stroke="#7a8a9a" stroke-width="1"/><rect x="3.5" y="3.5" width="10" height="9.3" fill="#b8c8ea" stroke="#7a8a9a" stroke-width="1"/></svg>
<svg style="position:absolute;left:1585px;top:182px;overflow:visible;" width="7" height="4" viewBox="0 0 7 4"><path d="M0 0 H7 L3.5 4 Z" fill="#111"/></svg>
<svg style="position:absolute;left:1605px;top:177px;overflow:visible;" width="15" height="14" viewBox="0 0 15 14"><path d="M0.8 2.5 Q0.8 1 2.3 1 H10 Q11.5 1 11.5 2.5 V9 Q11.5 10.5 10 10.5 H2.3 Q0.8 10.5 0.8 9 Z M3.5 3.5 H13.5 V12.5 H3.5 Z M1.2 1.4 L3.5 3.5 M11 1.4 L13.5 3.5 M11 10.2 L13.5 12.5 M1.2 10.2 L3.5 12.5" fill="none" stroke="#3688cb" stroke-width="1.1"/></svg>
<div style="position:absolute;left:1626px;top:175px;width:18px;height:18px;background:#a8d3f5;border:1px solid #3c9be8;border-radius:2px;box-sizing:border-box"></div>
<svg style="position:absolute;left:1628px;top:177px;overflow:visible;" width="14" height="14" viewBox="0 0 14 14"><rect x="0.5" y="0.5" width="13" height="13" fill="#cfe4f8" stroke="#777" stroke-width="1"/><path d="M7 2.5 V9.5" stroke="#3688cb" stroke-width="1"/><path d="M5.8 4 L7 2 L8.2 4" fill="none" stroke="#3688cb" stroke-width="0.9"/><path d="M7 9.5 L3 7" stroke="#4caa4c" stroke-width="1"/><path d="M7 9.5 L11.5 7" stroke="#e0407a" stroke-width="1"/></svg>
<div style="position:absolute;left:1649px;top:175px;width:18px;height:18px;background:#a8d3f5;border:1px solid #3c9be8;border-radius:2px;box-sizing:border-box"></div>
<svg style="position:absolute;left:1651px;top:177px;overflow:visible;" width="14" height="14" viewBox="0 0 14 14"><rect x="0.5" y="0.5" width="13" height="13" fill="#cfe4f8" stroke="#777" stroke-width="1"/><path d="M2.5 2.5 H11.5 V11.5 H2.5 Z M5.5 2.5 V11.5 M8.5 2.5 V11.5 M2.5 5.5 H11.5 M2.5 8.5 H11.5" fill="none" stroke="#3688cb" stroke-width="1"/></svg>
<div style="position:absolute;left:1673px;top:176px;width:1px;height:16px;background:#c4c4c4"></div>
<svg style="position:absolute;left:1681px;top:176px;overflow:visible;" width="16" height="16" viewBox="0 0 16 16"><path d="M0.5 1 H11 L14 4 H3.5 Z" fill="#c8c8c8" stroke="#9a9a9a" stroke-width="0.8"/><rect x="3.5" y="4" width="10.5" height="3.6" fill="#7ab2e4" stroke="#3688cb" stroke-width="0.8"/><circle cx="8.5" cy="12" r="3" fill="#fff" stroke="#e0305a" stroke-width="1.3"/><path d="M6.5 14 L10.5 10" stroke="#e0305a" stroke-width="1.2"/></svg>
<svg style="position:absolute;left:1704px;top:175px;overflow:visible;" width="16" height="18" viewBox="0 0 16 18"><path d="M8.5 1 C13 1 15.5 4.5 14.5 9 C13.5 13.5 9 17 4.5 17 C1 17 0.5 13.5 2.5 11.5 C4 10 3 8.5 3 6.5 C3 3.5 5.5 1 8.5 1 Z" fill="#d8d8d8" stroke="#7a7a7a" stroke-width="1.1"/><circle cx="7.5" cy="4.8" r="1.8" fill="#fff" stroke="#7a7a7a" stroke-width="0.8"/><circle cx="11.8" cy="6.8" r="1.3" fill="#3a87c8"/><circle cx="10.5" cy="10.5" r="1.3" fill="#f0962a"/><circle cx="7.5" cy="13" r="1.3" fill="#e0305a"/><circle cx="4.5" cy="14" r="1.1" fill="#e0305a"/></svg>
<svg style="position:absolute;left:1726px;top:182px;overflow:visible;" width="7" height="4" viewBox="0 0 7 4"><path d="M0 0 H7 L3.5 4 Z" fill="#111"/></svg>
<div style="position:absolute;left:1744px;top:176px;width:1px;height:16px;background:#c4c4c4"></div>
<svg style="position:absolute;left:1752px;top:176px;overflow:visible;" width="16" height="16" viewBox="0 0 16 16"><circle cx="8" cy="8" r="7.6" fill="#3688cb"/><circle cx="8" cy="8" r="3.1" fill="#fff"/><line x1="10.86" y1="8.50" x2="9.64" y2="15.40" stroke="#fff" stroke-width="1.1"/><line x1="8.99" y1="10.73" x2="2.41" y2="13.12" stroke="#fff" stroke-width="1.1"/><line x1="6.14" y1="10.22" x2="0.77" y2="5.72" stroke="#fff" stroke-width="1.1"/><line x1="5.14" y1="7.50" x2="6.36" y2="0.60" stroke="#fff" stroke-width="1.1"/><line x1="7.01" y1="5.27" x2="13.59" y2="2.88" stroke="#fff" stroke-width="1.1"/><line x1="9.86" y1="5.78" x2="15.23" y2="10.28" stroke="#fff" stroke-width="1.1"/></svg>
<svg style="position:absolute;left:1775px;top:182px;overflow:visible;" width="7" height="4" viewBox="0 0 7 4"><path d="M0 0 H7 L3.5 4 Z" fill="#111"/></svg>
<svg style="position:absolute;left:1792px;top:177px;overflow:visible;" width="17" height="14" viewBox="0 0 17 14"><path d="M0.5 3 H4.5 L6 0.8 H11 L12.5 3 H16.5 V13.5 H0.5 Z" fill="#3688cb"/><circle cx="8.5" cy="8" r="3.2" fill="none" stroke="#fff" stroke-width="1.5"/><rect x="2" y="4.3" width="2" height="1.3" fill="#fff"/></svg>
<svg style="position:absolute;left:1817px;top:176px;overflow:visible;" width="16" height="16" viewBox="0 0 16 16"><rect x="3.5" y="0.8" width="9" height="5" fill="#fff" stroke="#3688cb" stroke-width="1.2"/><path d="M0.5 6.5 Q0.5 5 2 5 H14 Q15.5 5 15.5 6.5 V12 H0.5 Z" fill="#7ab2e4" stroke="#3688cb" stroke-width="0.8"/><rect x="3.5" y="10" width="9" height="5.3" fill="#fff" stroke="#3688cb" stroke-width="1.2"/></svg>
<svg style="position:absolute;left:857px;top:197px" width="1059" height="729" viewBox="0 0 1059 729"><defs><linearGradient id="bg" x1="0" y1="0" x2="0" y2="1"><stop offset="0" stop-color="#fafbfe"/><stop offset="1" stop-color="#e5f1fe"/></linearGradient><filter id="glow" x="-5%" y="-5%" width="110%" height="110%"><feGaussianBlur stdDeviation="2.2"/></filter></defs><rect x="0" y="0" width="1059" height="729" fill="url(#bg)"/><line x1="218.0" y1="136.0" x2="861.0" y2="155.0" stroke="#8a8a8a" stroke-width="1" stroke-opacity="1"/><line x1="192.0" y1="144.0" x2="28.0" y2="322.5" stroke="#6a6a6a" stroke-width="1" stroke-opacity="1"/><line x1="153.0" y1="186.8" x2="157.0" y2="203.0" stroke="#6a6a6a" stroke-width="1" stroke-opacity="1"/><line x1="100.0" y1="245.5" x2="103.5" y2="261.5" stroke="#6a6a6a" stroke-width="1" stroke-opacity="1"/><line x1="43.0" y1="307.5" x2="48.0" y2="323.5" stroke="#6a6a6a" stroke-width="1" stroke-opacity="1"/><line x1="279.7" y1="138.0" x2="280.3" y2="146.0" stroke="#6a6a6a" stroke-width="1" stroke-opacity="1"/><line x1="531.0" y1="145.5" x2="531.5" y2="153.0" stroke="#6a6a6a" stroke-width="1" stroke-opacity="1"/><line x1="793.6" y1="153.0" x2="794.0" y2="161.5" stroke="#6a6a6a" stroke-width="1" stroke-opacity="1"/><line x1="55.0" y1="369.5" x2="40.0" y2="386.8" stroke="#6a6a6a" stroke-width="1" stroke-opacity="1"/><line x1="65.5" y1="434.0" x2="51.8" y2="450.0" stroke="#6a6a6a" stroke-width="1" stroke-opacity="1"/><line x1="78.0" y1="494.0" x2="63.6" y2="512.0" stroke="#6a6a6a" stroke-width="1" stroke-opacity="1"/><line x1="163.6" y1="519.0" x2="151.0" y2="535.5" stroke="#6a6a6a" stroke-width="1" stroke-opacity="1"/><line x1="428.5" y1="534.5" x2="417.5" y2="551.5" stroke="#6a6a6a" stroke-width="1" stroke-opacity="1"/><line x1="705.5" y1="552.8" x2="696.0" y2="570.5" stroke="#6a6a6a" stroke-width="1" stroke-opacity="1"/><line x1="861.8" y1="218.0" x2="866.5" y2="218.5" stroke="#6a6a6a" stroke-width="1" stroke-opacity="1"/><line x1="866.8" y1="280.5" x2="871.8" y2="281.0" stroke="#6a6a6a" stroke-width="1" stroke-opacity="1"/><line x1="871.8" y1="341.5" x2="876.5" y2="342.0" stroke="#6a6a6a" stroke-width="1" stroke-opacity="1"/><line x1="839.5" y1="416.6" x2="849.0" y2="417.2" stroke="#6a6a6a" stroke-width="1" stroke-opacity="1"/><line x1="803.6" y1="484.0" x2="813.6" y2="485.0" stroke="#6a6a6a" stroke-width="1" stroke-opacity="1"/><line x1="766.0" y1="555.5" x2="777.0" y2="556.5" stroke="#6a6a6a" stroke-width="1" stroke-opacity="1"/><polygon points="210.5,144.5 856.0,163.5 872.0,351.0 766.0,555.5 82.5,513.0 48.0,323.5" fill="none" stroke="#ff6060" stroke-width="5" stroke-opacity="0.48" filter="url(#glow)"/><line x1="43.0" y1="307.5" x2="80.6" y2="512.5" stroke="#8a7474" stroke-width="1" stroke-opacity="0.8"/><polygon points="210.5,144.5 856.0,163.5 872.0,351.0 766.0,555.5 82.5,513.0 48.0,323.5" fill="#fcaeae"/><polygon points="856.0,163.5 872.0,351.0 766.0,555.5 746.0,354.5" fill="#e89a9a"/><polygon points="48.0,323.5 746.0,354.5 766.0,555.5 82.5,513.0" fill="#fcaeae"/><polygon points="222.3,281.0 274.2,220.3 288.8,283.5" fill="#e89c9c"/><polygon points="338.1,222.3 363.0,193.0 378.3,255.2 354.8,286.8" fill="#e89c9c"/><polygon points="539.6,328.2 625.2,202.1 655.4,333.3" fill="#e89c9c"/><polygon points="760.9,206.2 683.2,334.6 683.0,351.7 737.0,354.0 738.0,346.3" fill="#f7a6a6"/><polygon points="210.5,144.5 48.0,323.5 82.5,513.0 239.0,322.0" fill="#c83c3c" fill-opacity="0.04"/><polygon points="222.3,281.0 354.8,286.8 357.0,399.7 278.6,396.0" fill="#c83c3c" fill-opacity="0.045"/><polygon points="378.3,255.2 447.7,257.2 446.6,370.4 381.0,368.0" fill="#c83c3c" fill-opacity="0.045"/><polygon points="447.7,257.2 492.0,197.4 475.0,328.7 446.6,370.4" fill="#c83c3c" fill-opacity="0.07"/><polygon points="354.8,286.8 378.3,255.2 381.0,368.0 357.0,399.7" fill="#c83c3c" fill-opacity="0.06"/><polygon points="539.6,328.2 683.2,334.6 678.0,451.0 593.0,447.7" fill="#c83c3c" fill-opacity="0.045"/><polygon points="683.2,334.6 760.9,206.2 738.0,346.0 678.0,451.0" fill="#c83c3c" fill-opacity="0.05"/><line x1="222.3" y1="281.0" x2="278.6" y2="396.0" stroke="#ff7070" stroke-width="1" stroke-opacity="0.45"/><line x1="354.8" y1="286.8" x2="357.0" y2="399.7" stroke="#ff7070" stroke-width="1" stroke-opacity="0.45"/><line x1="378.3" y1="255.2" x2="381.0" y2="368.0" stroke="#ff7070" stroke-width="1" stroke-opacity="0.45"/><line x1="447.7" y1="257.2" x2="446.6" y2="370.4" stroke="#ff7070" stroke-width="1" stroke-opacity="0.45"/><line x1="492.0" y1="197.4" x2="475.0" y2="328.7" stroke="#ff7070" stroke-width="1" stroke-opacity="0.45"/><line x1="278.6" y1="396.0" x2="357.0" y2="399.7" stroke="#ff7070" stroke-width="1" stroke-opacity="0.45"/><line x1="357.0" y1="399.7" x2="381.0" y2="368.0" stroke="#ff7070" stroke-width="1" stroke-opacity="0.45"/><line x1="381.0" y1="368.0" x2="446.6" y2="370.4" stroke="#ff7070" stroke-width="1" stroke-opacity="0.45"/><line x1="446.6" y1="370.4" x2="475.0" y2="328.7" stroke="#ff7070" stroke-width="1" stroke-opacity="0.45"/><line x1="274.2" y1="220.3" x2="288.8" y2="282.7" stroke="#ff7070" stroke-width="1" stroke-opacity="0.9"/><line x1="288.8" y1="283.0" x2="303.0" y2="343.0" stroke="#ff7070" stroke-width="1" stroke-opacity="0.35"/><line x1="363.0" y1="193.0" x2="378.3" y2="255.2" stroke="#ff7070" stroke-width="1" stroke-opacity="0.9"/><line x1="338.1" y1="222.3" x2="354.8" y2="286.8" stroke="#ff7070" stroke-width="1" stroke-opacity="0.9"/><line x1="539.6" y1="328.2" x2="593.0" y2="447.7" stroke="#ff7070" stroke-width="1" stroke-opacity="0.45"/><line x1="683.2" y1="334.6" x2="678.0" y2="451.0" stroke="#ff7070" stroke-width="1" stroke-opacity="0.45"/><line x1="593.0" y1="447.7" x2="678.0" y2="451.0" stroke="#ff7070" stroke-width="1" stroke-opacity="0.45"/><line x1="760.9" y1="206.2" x2="738.0" y2="346.0" stroke="#ff7070" stroke-width="1" stroke-opacity="0.45"/><line x1="678.0" y1="451.0" x2="738.0" y2="346.0" stroke="#ff7070" stroke-width="1" stroke-opacity="0.3"/><line x1="625.2" y1="202.1" x2="655.4" y2="333.3" stroke="#ff7070" stroke-width="1" stroke-opacity="0.9"/><line x1="655.4" y1="333.3" x2="673.0" y2="403.0" stroke="#ff7070" stroke-width="1" stroke-opacity="0.3"/><line x1="239.0" y1="322.0" x2="872.0" y2="351.0" stroke="#ff7070" stroke-width="1" stroke-opacity="0.45"/><line x1="239.0" y1="322.0" x2="82.5" y2="513.0" stroke="#ff7070" stroke-width="1" stroke-opacity="0.4"/><line x1="210.5" y1="144.5" x2="239.0" y2="322.0" stroke="#ff7070" stroke-width="1" stroke-opacity="0.3"/><line x1="140.0" y1="443.0" x2="803.6" y2="484.0" stroke="#d06060" stroke-width="1" stroke-opacity="0.09"/><line x1="187.8" y1="384.5" x2="839.5" y2="416.6" stroke="#d06060" stroke-width="1" stroke-opacity="0.09"/><line x1="163.6" y1="519.0" x2="333.0" y2="325.0" stroke="#d06060" stroke-width="1" stroke-opacity="0.09"/><line x1="431.0" y1="534.0" x2="601.0" y2="336.0" stroke="#d06060" stroke-width="1" stroke-opacity="0.09"/><line x1="705.5" y1="552.8" x2="828.0" y2="348.0" stroke="#d06060" stroke-width="1" stroke-opacity="0.09"/><line x1="280.3" y1="146.0" x2="307.0" y2="325.0" stroke="#d06060" stroke-width="1" stroke-opacity="0.09"/><line x1="531.5" y1="153.0" x2="545.0" y2="336.0" stroke="#d06060" stroke-width="1" stroke-opacity="0.09"/><line x1="794.0" y1="161.5" x2="808.0" y2="348.0" stroke="#d06060" stroke-width="1" stroke-opacity="0.09"/><line x1="218.7" y1="196.0" x2="861.8" y2="218.0" stroke="#d06060" stroke-width="1" stroke-opacity="0.09"/><line x1="228.0" y1="255.3" x2="866.8" y2="280.5" stroke="#d06060" stroke-width="1" stroke-opacity="0.09"/><line x1="54.0" y1="372.0" x2="217.7" y2="190.0" stroke="#d06060" stroke-width="1" stroke-opacity="0.09"/><line x1="65.5" y1="434.0" x2="227.0" y2="248.0" stroke="#d06060" stroke-width="1" stroke-opacity="0.09"/><line x1="157.0" y1="203.0" x2="187.8" y2="384.5" stroke="#d06060" stroke-width="1" stroke-opacity="0.09"/><line x1="103.5" y1="261.5" x2="136.7" y2="446.9" stroke="#d06060" stroke-width="1" stroke-opacity="0.09"/><polygon points="210.5,144.5 856.0,163.5 872.0,351.0 766.0,555.5 82.5,513.0 48.0,323.5" fill="none" stroke="#ff2a2a" stroke-width="1.15" stroke-linejoin="round"/><polyline points="48.0,323.5 746.0,354.5 856.0,163.5" fill="none" stroke="#ff2a2a" stroke-width="1.5" stroke-linejoin="round"/><polyline points="746.0,354.5 766.0,555.5" fill="none" stroke="#ff2a2a" stroke-width="1.6" stroke-linejoin="round"/><polygon points="274.2,220.3 338.1,222.3 363.0,193.0 492.0,197.4 447.7,257.2 378.3,255.2 354.8,286.8 222.3,281.0" fill="none" stroke="#ff2a2a" stroke-width="1.2" stroke-linejoin="round"/><polygon points="625.2,202.1 760.9,206.2 683.2,334.6 539.6,328.2" fill="none" stroke="#ff2a2a" stroke-width="1.2" stroke-linejoin="round"/><text x="142.5" y="180.0" font-family="DejaVu Sans, sans-serif" font-size="12" fill="#000" text-anchor="middle">0</text><text x="85.5" y="208.5" font-family="DejaVu Sans, sans-serif" font-size="10" fill="#000" text-anchor="middle">m</text><text x="88.5" y="239.0" font-family="DejaVu Sans, sans-serif" font-size="12" fill="#000" text-anchor="middle">1</text><text x="32.0" y="301.0" font-family="DejaVu Sans, sans-serif" font-size="12" fill="#000" text-anchor="middle">2</text><text x="14.0" y="332.0" font-family="DejaVu Sans, sans-serif" font-size="12" fill="#000" text-anchor="middle">0</text><text x="19.5" y="396.0" font-family="DejaVu Sans, sans-serif" font-size="12" fill="#000" text-anchor="middle">0.5</text><text x="37.6" y="460.0" font-family="DejaVu Sans, sans-serif" font-size="12" fill="#000" text-anchor="middle">1</text><text x="42.5" y="522.0" font-family="DejaVu Sans, sans-serif" font-size="12" fill="#000" text-anchor="middle">1.5</text><text x="148.5" y="557.0" font-family="DejaVu Sans, sans-serif" font-size="12" fill="#000" text-anchor="middle">4</text><text x="414.5" y="574.0" font-family="DejaVu Sans, sans-serif" font-size="12" fill="#000" text-anchor="middle">2</text><text x="411.0" y="592.5" font-family="DejaVu Sans, sans-serif" font-size="10" fill="#000" text-anchor="middle">m</text><text x="694.0" y="592.0" font-family="DejaVu Sans, sans-serif" font-size="12" fill="#000" text-anchor="middle">0</text><text x="-1.0" y="435.5" font-family="DejaVu Sans, sans-serif" font-size="10" fill="#000" text-anchor="middle">m</text><path d="M6 62.5 H18.5 M15 59.5 L18.5 62.5 L15 65.5" fill="none" stroke="#000" stroke-width="1"/><text x="22.0" y="67.0" font-family="DejaVu Sans, sans-serif" font-size="12" fill="#ff2020" text-anchor="start">dif1</text><text x="8.7" y="685.0" font-family="DejaVu Sans, sans-serif" font-size="12" fill="#000" text-anchor="middle">y</text><text x="33.5" y="704.5" font-family="DejaVu Sans, sans-serif" font-size="12" fill="#000" text-anchor="middle">x</text><text x="48.2" y="721.5" font-family="DejaVu Sans, sans-serif" font-size="12" fill="#000" text-anchor="middle">z</text><line x1="44" y1="684.4" x2="24" y2="683.5" stroke="#4aa83c" stroke-width="1.7"/><path d="M15 683.2 L25 680.4 L25 686.4 Z" fill="#4aa83c"/><line x1="44" y1="684.4" x2="46.60000000000002" y2="704" stroke="#3f7dbd" stroke-width="1.7"/><path d="M47.39999999999998 711.2 L43.60000000000002 703.4 L49.60000000000002 702.8 Z" fill="#3f7dbd"/><line x1="44" y1="684.4" x2="36.5" y2="696" stroke="#e0185a" stroke-width="2"/><rect x="34.799999999999955" y="692.2" width="5.6" height="5.6" rx="1.2" fill="#e0185a" transform="rotate(-20 37.60000000000002 695)"/><defs><linearGradient id="lg2" x1="0" y1="0" x2="1" y2="0.3"><stop offset="0" stop-color="#f6ea3c"/><stop offset="0.35" stop-color="#e8e050"/><stop offset="0.6" stop-color="#3cb4c8"/><stop offset="1" stop-color="#1c3cc0"/></linearGradient></defs><g transform="translate(1032,5)"><path d="M1 4 L18 0 L22.5 13 L8 19.5 Z" fill="#ececec"/><rect x="5.2" y="3.6" width="14" height="11.8" rx="2.4" fill="#1a2a90"/><rect x="7" y="5.2" width="10.6" height="8.4" rx="0.8" fill="url(#lg2)"/></g></svg>
<svg style="position:absolute;left:857px;top:197px;overflow:visible;" width="1059" height="729" viewBox="0 0 1059 729"><rect x="0.5" y="0.5" width="1058" height="728" fill="none" stroke="#666" stroke-width="1" stroke-dasharray="2 1" shape-rendering="crispEdges"/></svg>
<div style="position:absolute;left:856px;top:932px;width:1061px;height:197px;border:1px solid #d4d4d4;box-sizing:border-box;background:#fff"></div>
<div style="position:absolute;left:857px;top:961px;width:1059px;height:1px;background:#d4d4d4"></div>
<div style="position:absolute;left:861px;top:938px;width:89px;height:24px;border:1px solid #d4d4d4;border-bottom:none;box-sizing:border-box;background:#fff"></div>
<div style="position:absolute;left:866.2px;top:942.5px;line-height:17px;font-size:13px;color:#2f5fa8;white-space:nowrap;letter-spacing:-0.136px;">Messages</div>
<svg style="position:absolute;left:933px;top:946px;overflow:visible;" width="9" height="9" viewBox="0 0 9 9"><path d="M0.5 0.5 L8.5 8.5 M8.5 0.5 L0.5 8.5" stroke="#a9b7cf" stroke-width="1"/></svg>
<div style="position:absolute;left:958px;top:938px;width:60px;height:23px;background:#ececec"></div>
<div style="position:absolute;left:962.4px;top:942.0px;line-height:17px;font-size:13px;color:#000;white-space:nowrap;letter-spacing:-0.132px;">Progress</div>
<div style="position:absolute;left:1026px;top:938px;width:30px;height:23px;background:#ececec"></div>
<div style="position:absolute;left:1029.8px;top:942.0px;line-height:17px;font-size:13px;color:#000;white-space:nowrap;letter-spacing:0.154px;">Log</div>
<svg style="position:absolute;left:1890.1px;top:948.5px;overflow:visible;" width="8.4" height="4.5" viewBox="0 0 8.4 4.5"><path d="M0 0 H8.4 L4.2 4.5 Z" fill="#555"/></svg>
<svg style="position:absolute;left:1903px;top:946.2px;overflow:visible;" width="11" height="12" viewBox="0 0 11 12"><path d="M3 0.5 H8 V5 L9.5 7 H1.5 L3 5 Z" fill="#555"/><path d="M5.5 7 V10.3" stroke="#555" stroke-width="1.2"/></svg>
<svg style="position:absolute;left:866px;top:968px;overflow:visible;" width="13" height="18" viewBox="0 0 13 18"><path d="M1.2 1.5 L5.2 10" stroke="#6a6a6a" stroke-width="1.6"/><path d="M3.3 9.9 L6.8 8.6 L12 14.3 L8.6 15 L7.6 16.3 L4.8 16.4 Z" fill="#f0a850"/><path d="M5 10.5 L6.5 15.8 M6 10 L9.5 14.8" stroke="#f8cf98" stroke-width="0.6"/></svg>
<div style="position:absolute;left:886px;top:968px;width:18px;height:18px;background:#a8d3f5;border:1px solid #3c9be8;border-radius:2px;box-sizing:border-box"></div>
<svg style="position:absolute;left:888px;top:970px;overflow:visible;" width="14" height="14" viewBox="0 0 14 14"><rect x="0.6" y="0.6" width="12.8" height="10" fill="#fff" stroke="#3688cb" stroke-width="1.1"/><path d="M0.6 3 H13.4" stroke="#3688cb" stroke-width="1.2"/><rect x="4" y="6" width="9.5" height="7" fill="#fff" stroke="#3688cb" stroke-width="0.9"/><path d="M4 6 L8.7 10 L13.5 6" fill="none" stroke="#3688cb" stroke-width="0.8"/></svg>
<div style="position:absolute;left:861px;top:990px;width:1051px;height:134px;border:1px solid #d4d4d4;box-sizing:border-box;background:#fff"></div>
<div style="position:absolute;left:864px;top:988.0px;line-height:16px;font-size:12px;color:#000;white-space:nowrap;letter-spacing:-0.165px;">[Jan 25, 2022, 8:54 AM] Opened file: C:\Users\jf\Downloads\ForES2.mph</div>
<div style="position:absolute;left:864px;top:1003.0px;line-height:16px;font-size:12px;color:#000;white-space:nowrap;letter-spacing:-0.149px;">[Jan 25, 2022, 8:59 AM] Geometry error (loft1): Error for start profile.</div>
<div style="position:absolute;left:864px;top:1018.0px;line-height:16px;font-size:12px;color:#000;white-space:nowrap;letter-spacing:-0.148px;">[Jan 25, 2022, 9:00 AM] Geometry error (loft1): Error for end profile.</div>
<div style="position:absolute;left:864px;top:1033.0px;line-height:16px;font-size:12px;color:#000;white-space:nowrap;letter-spacing:-0.199px;">[Jan 25, 2022, 9:01 AM] Saved file: C:\Users\jf\Downloads\ForES2.mph</div>
<div style="position:absolute;left:864px;top:1048.0px;line-height:16px;font-size:12px;color:#000;white-space:nowrap;letter-spacing:-0.153px;">[Jan 25, 2022, 9:01 AM] Opened file: C:\Users\jf\Downloads\ForES.mph</div>
<div style="position:absolute;left:864px;top:1063.0px;line-height:16px;font-size:12px;color:#000;white-space:nowrap;letter-spacing:-0.165px;">[Jan 25, 2022, 9:02 AM] Opened file: C:\Users\jf\Downloads\ForES2.mph</div>
<div style="position:absolute;left:864px;top:1078.0px;line-height:16px;font-size:12px;color:#000;white-space:nowrap;letter-spacing:-0.237px;">[Jan 25, 2022, 9:07 AM] Finalized geometry has 4 domains, 32 boundaries, 68 edges, and 42 vertices.</div>
<div style="position:absolute;left:864px;top:1093.0px;line-height:16px;font-size:12px;color:#000;white-space:nowrap;letter-spacing:-0.162px;">[Jan 25, 2022, 9:07 AM] Finalized geometry is disconnected and has 2 components.</div>
<div style="position:absolute;left:1894px;top:991px;width:17px;height:132px;background:#fff"></div>
<div style="position:absolute;left:1894px;top:991px;width:17px;height:17px;background:#f6f6f6"></div>
<svg style="position:absolute;left:1899px;top:997px;overflow:visible;" width="8" height="5" viewBox="0 0 8 5"><path d="M0.5 4.5 L4 1 L7.5 4.5" fill="none" stroke="#c8c8c8" stroke-width="1"/></svg>
<div style="position:absolute;left:1894px;top:1034px;width:17px;height:72px;background:#e6e6e6"></div>
<div style="position:absolute;left:1894px;top:1106px;width:17px;height:17px;background:#f6f6f6"></div>
<svg style="position:absolute;left:1899px;top:1112px;overflow:visible;" width="8" height="5" viewBox="0 0 8 5"><path d="M0.5 0.5 L4 4 L7.5 0.5" fill="none" stroke="#c8c8c8" stroke-width="1"/></svg>
<div style="position:absolute;left:1241.7px;top:1140.5px;line-height:16px;font-size:12px;color:#000;white-space:nowrap;letter-spacing:-0.765px;">1.42 GB | 1.29 GB</div>
</body></html>
